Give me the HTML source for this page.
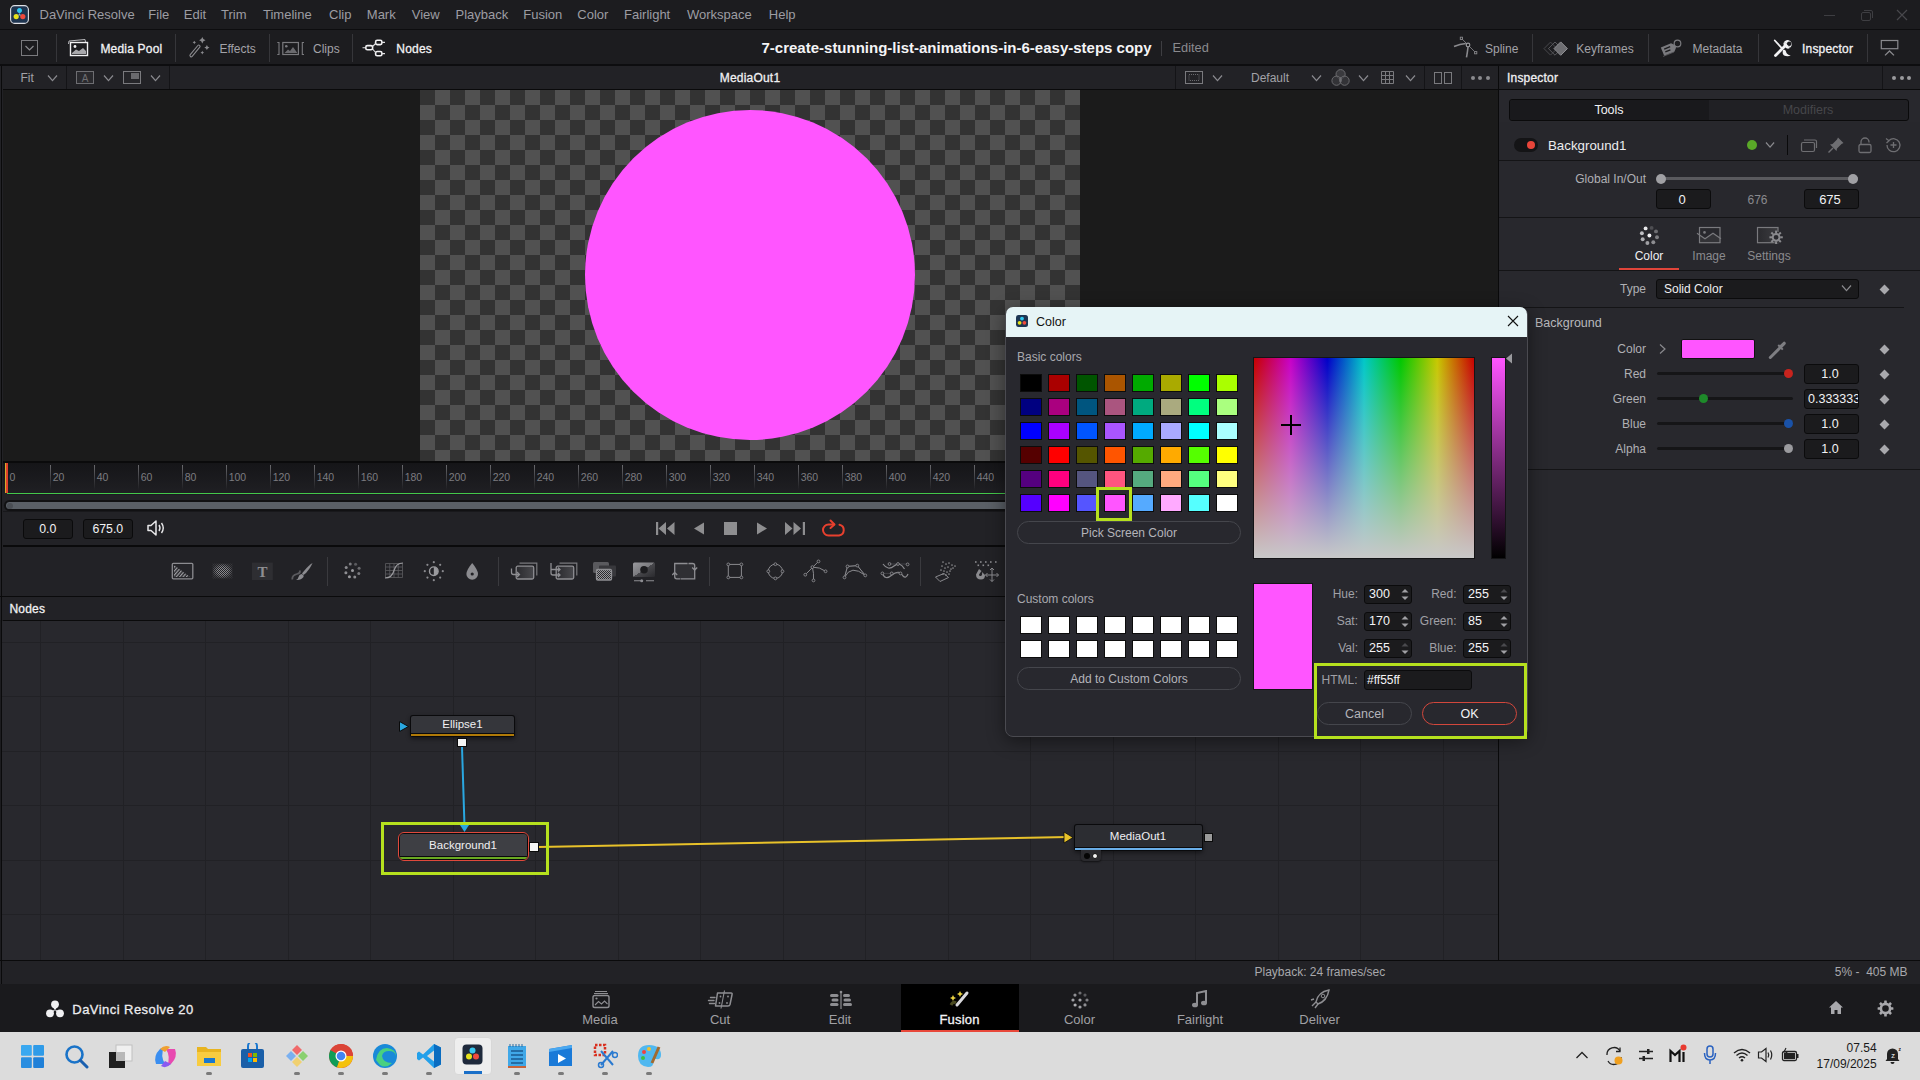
<!DOCTYPE html><html><head><meta charset="utf-8"><style>
*{margin:0;padding:0;box-sizing:border-box}
html,body{width:1920px;height:1080px;overflow:hidden;background:#1c1c1f;font-family:'Liberation Sans', sans-serif}
.a{position:absolute}
.t{position:absolute;white-space:pre}
</style></head><body><div class="a" style="left:0px;top:0px;width:1920px;height:29px;background:#1c1c1f;"></div>
<div class="a" style="left:0px;top:29px;width:1920px;height:1px;background:#0d0d0f;"></div>
<div class="a" style="left:0px;top:30px;width:1920px;height:35px;background:#1c1c1f;"></div>
<div class="a" style="left:0px;top:64px;width:1920px;height:2px;background:#0d0d0f;"></div>
<svg class="a" style="left:10px;top:5px;" width="19" height="19" viewBox="0 0 19 19"><rect x="0.6" y="0.6" width="17.8" height="17.8" rx="4" fill="#1f3550" stroke="#e0e0e4" stroke-width="1.1"/><path d="M9.5 3.2 a2.3 2.3 0 1 1 -0.01 0 Z" fill="#2ec7f0"/><circle cx="9.5" cy="5.6" r="2.3" fill="#2ec7f0"/><circle cx="6.2" cy="11.6" r="2.6" fill="#e6e21c"/><circle cx="12.8" cy="11.6" r="2.6" fill="#f04a3c"/><path d="M9.5 8 L8 10.5 L11 10.5Z" fill="#8aa0b8"/></svg>
<div class="t" style="top:8.00px;font-size:13px;line-height:13px;color:#9d9da3;left:39.5px;">DaVinci Resolve</div>
<div class="t" style="top:8.00px;font-size:13px;line-height:13px;color:#9d9da3;left:148.3px;">File</div>
<div class="t" style="top:8.00px;font-size:13px;line-height:13px;color:#9d9da3;left:183.8px;">Edit</div>
<div class="t" style="top:8.00px;font-size:13px;line-height:13px;color:#9d9da3;left:221px;">Trim</div>
<div class="t" style="top:8.00px;font-size:13px;line-height:13px;color:#9d9da3;left:263px;">Timeline</div>
<div class="t" style="top:8.00px;font-size:13px;line-height:13px;color:#9d9da3;left:329px;">Clip</div>
<div class="t" style="top:8.00px;font-size:13px;line-height:13px;color:#9d9da3;left:366.8px;">Mark</div>
<div class="t" style="top:8.00px;font-size:13px;line-height:13px;color:#9d9da3;left:411.8px;">View</div>
<div class="t" style="top:8.00px;font-size:13px;line-height:13px;color:#9d9da3;left:455.5px;">Playback</div>
<div class="t" style="top:8.00px;font-size:13px;line-height:13px;color:#9d9da3;left:523.3px;">Fusion</div>
<div class="t" style="top:8.00px;font-size:13px;line-height:13px;color:#9d9da3;left:577.3px;">Color</div>
<div class="t" style="top:8.00px;font-size:13px;line-height:13px;color:#9d9da3;left:624px;">Fairlight</div>
<div class="t" style="top:8.00px;font-size:13px;line-height:13px;color:#9d9da3;left:687px;">Workspace</div>
<div class="t" style="top:8.00px;font-size:13px;line-height:13px;color:#9d9da3;left:768.8px;">Help</div>
<div class="a" style="left:1824px;top:15px;width:11px;height:1px;background:#3e3e42;"></div>
<svg class="a" style="left:1859px;top:8px;" width="16" height="14" viewBox="0 0 16 14"><rect x="2.5" y="4.5" width="9" height="8" rx="1.5" fill="none" stroke="#3e3e42"/><path d="M5 2.5 H12 a1.5 1.5 0 0 1 1.5 1.5 V10" fill="none" stroke="#3e3e42"/></svg>
<svg class="a" style="left:1896px;top:9px;" width="12" height="12" viewBox="0 0 12 12"><path d="M1 1 L11 11 M11 1 L1 11" stroke="#48484c" stroke-width="1.2"/></svg>
<svg class="a" style="left:20px;top:39px;" width="20" height="18" viewBox="0 0 20 18"><rect x="1.5" y="1.5" width="16" height="15" fill="none" stroke="#7a7a7e" stroke-width="1"/><path d="M5.5 7 L9.5 11 L13.5 7" fill="none" stroke="#8a8a8e" stroke-width="1.2"/></svg>
<div class="a" style="left:56px;top:34px;width:1px;height:28px;background:#36363a;"></div>
<div class="a" style="left:175px;top:34px;width:1px;height:28px;background:#36363a;"></div>
<div class="a" style="left:269px;top:34px;width:1px;height:28px;background:#36363a;"></div>
<div class="a" style="left:352px;top:34px;width:1px;height:28px;background:#36363a;"></div>
<svg class="a" style="left:66px;top:38px;" width="26" height="20" viewBox="0 0 26 20"><path d="M2.5 6 L3 3 L19 1.5 L19.5 4" fill="none" stroke="#b8b8bc" stroke-width="1"/><rect x="4.5" y="4.5" width="17" height="13" fill="none" stroke="#f0f0f2" stroke-width="1.4"/><circle cx="9" cy="8.5" r="1.4" fill="#f0f0f2"/><path d="M6 15 L10 11.5 L13 13 L17 10 L20 13 V16 H6 Z" fill="#a8a8ac"/></svg>
<div class="t" style="top:42.54px;font-size:12px;line-height:12px;color:#f2f2f4;-webkit-text-stroke:0.3px #f2f2f4;letter-spacing:0.2px;left:100.4px;">Media Pool</div>
<svg class="a" style="left:188px;top:36px;" width="24" height="24" viewBox="0 0 24 24"><path d="M3.2 19.5 L10.8 10.3" stroke="#8a8a8e" stroke-width="3.6" stroke-linecap="round"/><path d="M3.2 19.5 L10.8 10.3" stroke="#1c1c1f" stroke-width="1.4" stroke-linecap="round"/><path d="M14.3 1.0499999999999998 Q14.9 3.65 17.5 4.25 Q14.9 4.85 14.3 7.45 Q13.700000000000001 4.85 11.100000000000001 4.25 Q13.700000000000001 3.65 14.3 1.0499999999999998Z M18.9 8.9 Q19.4 11.0 21.5 11.5 Q19.4 12.0 18.9 14.1 Q18.4 12.0 16.299999999999997 11.5 Q18.4 11.0 18.9 8.9Z M6.3 4.8 Q6.6499999999999995 6.15 8.0 6.5 Q6.6499999999999995 6.85 6.3 8.2 Q5.95 6.85 4.6 6.5 Q5.95 6.15 6.3 4.8Z M14.3 14.8 Q14.65 16.25 16.1 16.6 Q14.65 16.950000000000003 14.3 18.400000000000002 Q13.950000000000001 16.950000000000003 12.5 16.6 Q13.950000000000001 16.25 14.3 14.8Z" fill="#8a8a8e"/></svg>
<div class="t" style="top:42.54px;font-size:12px;line-height:12px;color:#a3a3a8;left:219.4px;">Effects</div>
<svg class="a" style="left:276px;top:40px;" width="30" height="17" viewBox="0 0 30 17"><path d="M1.3 2.5 H3 V14.5 H1.3 M28 2.5 H26.3 V14.5 H28" fill="none" stroke="#7a7a7e" stroke-width="1.1"/><rect x="6.8" y="2.5" width="15.6" height="12" fill="none" stroke="#7a7a7e" stroke-width="1.2"/><circle cx="10.3" cy="6.3" r="1.3" fill="#7a7a7e"/><path d="M8.5 13 L12 9.5 L14 11 L17 7 L21 12.5 V13Z" fill="#6a6a6e"/></svg>
<div class="t" style="top:42.54px;font-size:12px;line-height:12px;color:#a3a3a8;left:313px;">Clips</div>
<svg class="a" style="left:361px;top:37px;" width="26" height="22" viewBox="0 0 26 22"><rect x="4.8" y="8.6" width="6.8" height="4.2" rx="1.6" fill="none" stroke="#f0f0f2" stroke-width="1.6"/><rect x="14.6" y="3.3" width="6.3" height="4.3" rx="1.6" fill="none" stroke="#f0f0f2" stroke-width="1.6"/><rect x="14.6" y="14.5" width="6.3" height="4.3" rx="1.6" fill="none" stroke="#f0f0f2" stroke-width="1.6"/><path d="M1.5 10.7 H4.8 M11.6 9.5 L14.6 6.5 M11.6 12 L14.6 15.5 M20.9 5.4 H24 M20.9 16.6 H24" fill="none" stroke="#e0e0e2" stroke-width="1.1"/></svg>
<div class="t" style="top:42.54px;font-size:12px;line-height:12px;color:#f2f2f4;-webkit-text-stroke:0.3px #f2f2f4;letter-spacing:0.2px;left:396.3px;">Nodes</div>
<div class="t" style="top:40.30px;font-size:15px;line-height:15px;color:#f4f4f6;font-weight:700;left:761.5px;">7-create-stunning-list-animations-in-6-easy-steps copy</div>
<div class="a" style="left:1161px;top:41px;width:1px;height:15px;background:#3e3e42;"></div>
<div class="t" style="top:41.86px;font-size:12.8px;line-height:12.8px;color:#8a8a8e;left:1172.5px;">Edited</div>
<div class="a" style="left:1532px;top:34px;width:1px;height:28px;background:#36363a;"></div>
<div class="a" style="left:1648px;top:34px;width:1px;height:28px;background:#36363a;"></div>
<div class="a" style="left:1758px;top:34px;width:1px;height:28px;background:#36363a;"></div>
<div class="a" style="left:1867px;top:34px;width:1px;height:28px;background:#36363a;"></div>
<svg class="a" style="left:1450px;top:34px;" width="30" height="26" viewBox="0 0 30 26"><path d="M4 12.6 Q10 10 15.8 9.5" fill="none" stroke="#8a8a8e" stroke-width="1.6"/><path d="M12.4 5.3 L16.8 9.8 M19.2 12.2 L24.6 17.6" stroke="#8a8a8e" stroke-width="0.8"/><rect x="10.3" y="3.2" width="2.2" height="2.2" fill="none" stroke="#8a8a8e" stroke-width="0.9"/><rect x="24.6" y="17.6" width="2.2" height="2.2" fill="none" stroke="#8a8a8e" stroke-width="0.9"/><circle cx="18" cy="11" r="1.8" fill="none" stroke="#9a9a9e" stroke-width="1.2"/><path d="M18 13 Q17.5 18 16.5 23.4" fill="none" stroke="#8a8a8e" stroke-width="1.6"/></svg>
<div class="t" style="top:42.54px;font-size:12px;line-height:12px;color:#a3a3a8;left:1485px;">Spline</div>
<svg class="a" style="left:1542px;top:38px;" width="28" height="22" viewBox="0 0 28 22"><path d="M8.5 4.1 L2 10.6 L8.5 17.1 L15 10.6 Z" fill="none" stroke="#48484c" stroke-width="1"/><path d="M13 4 L6.4 10.6 L13 17.2 L19.6 10.6 Z" fill="none" stroke="#58585c" stroke-width="1"/><path d="M18.7 3.9 L12 10.6 L18.7 17.3 L25.4 10.6 Z" fill="#6e6e72" stroke="#909094" stroke-width="1"/></svg>
<div class="t" style="top:42.54px;font-size:12px;line-height:12px;color:#a3a3a8;left:1576.3px;">Keyframes</div>
<svg class="a" style="left:1660px;top:38px;" width="24" height="20" viewBox="0 0 24 20"><g transform="rotate(-22 9 11)"><path d="M2 6.5 H13 L16 9.5 V12.5 L13 15.5 H2 Z" fill="#7a7a7e"/><path d="M4.5 9.3 H11 M4.5 12.3 H10" stroke="#1c1c1f" stroke-width="1.4"/></g><circle cx="17.5" cy="5.5" r="3.3" fill="none" stroke="#7a7a7e" stroke-width="1.2"/><path d="M3 18.5 L14 14" stroke="#5a5a5e" stroke-width="0.8"/></svg>
<div class="t" style="top:42.54px;font-size:12px;line-height:12px;color:#a3a3a8;left:1692.5px;">Metadata</div>
<svg class="a" style="left:1772px;top:36px;" width="24" height="24" viewBox="0 0 24 24"><path d="M2.8 4.5 L10 12.3" stroke="#f2f2f4" stroke-width="1.8" stroke-linecap="round"/><path d="M11 14 Q10 18 12 19.5 Q15.5 21 18.8 19.6 Q14.5 18.5 14 15.5 Q13.5 13 11 14Z" fill="#f2f2f4"/><path d="M3.5 19.5 L13.2 9.8" stroke="#f2f2f4" stroke-width="2.8" stroke-linecap="round"/><path d="M12 10.5 A4.2 4.2 0 1 1 17.5 12 L17 10 A2.2 2.2 0 1 0 15 7.6 L12.5 6.5 A4.2 4.2 0 0 0 12 10.5Z" fill="#f2f2f4"/><path d="M13 11 A4 4 0 0 1 12.2 6.6 L15 7.5 Q14.5 9 16.5 9.8 L17.6 12.3 A4 4 0 0 1 13 11Z" fill="#f2f2f4"/></svg>
<div class="t" style="top:42.54px;font-size:12px;line-height:12px;color:#f2f2f4;-webkit-text-stroke:0.3px #f2f2f4;letter-spacing:0.2px;left:1802px;">Inspector</div>
<svg class="a" style="left:1879px;top:38px;" width="22" height="20" viewBox="0 0 22 20"><rect x="2.3" y="2.5" width="16.5" height="8.2" fill="none" stroke="#8a8a8e" stroke-width="1.2"/><path d="M6 17.4 L10.5 13 L15 17.4" fill="none" stroke="#8a8a8e" stroke-width="1.3"/></svg>
<div class="a" style="left:0px;top:66px;width:1498px;height:530px;background:#222226;"></div>
<div class="a" style="left:1px;top:66px;width:1px;height:530px;background:#0a0a0b;"></div>
<div class="t" style="top:71.84px;font-size:12px;line-height:12px;color:#a3a3a8;left:20.5px;">Fit</div>
<svg class="a" style="left:46.5px;top:73.9px;" width="11.0" height="8.2" viewBox="0 0 11.0 8.2"><path d="M1 1.5 L5.50 6.70 L10.00 1.5" fill="none" stroke="#8a8a8f" stroke-width="1.2"/></svg>
<div class="a" style="left:66px;top:66px;width:1px;height:23px;background:#141417;"></div>
<svg class="a" style="left:75px;top:70px;" width="20" height="15" viewBox="0 0 20 15"><rect x="1.5" y="1.5" width="17" height="12" fill="#2a2a2e" stroke="#6e6e72"/><text x="10" y="11.5" font-size="10" text-anchor="middle" fill="#6e6e72" font-family="Liberation Sans">A</text></svg>
<svg class="a" style="left:103.0px;top:73.9px;" width="11.0" height="8.2" viewBox="0 0 11.0 8.2"><path d="M1 1.5 L5.50 6.70 L10.00 1.5" fill="none" stroke="#8a8a8f" stroke-width="1.2"/></svg>
<svg class="a" style="left:122px;top:70px;" width="20" height="15" viewBox="0 0 20 15"><rect x="1.5" y="1.5" width="17" height="12" fill="#252529" stroke="#7a7a7e"/><rect x="9" y="3" width="8" height="6" fill="#6a6a6e"/></svg>
<svg class="a" style="left:150.0px;top:73.9px;" width="11.0" height="8.2" viewBox="0 0 11.0 8.2"><path d="M1 1.5 L5.50 6.70 L10.00 1.5" fill="none" stroke="#8a8a8f" stroke-width="1.2"/></svg>
<div class="a" style="left:169px;top:66px;width:1px;height:23px;background:#141417;"></div>
<div class="t" style="top:71.84px;font-size:12px;line-height:12px;color:#f0f0f2;-webkit-text-stroke:0.3px #f0f0f2;letter-spacing:0.2px;left:350px;width:800px;text-align:center;">MediaOut1</div>
<div class="a" style="left:1175px;top:66px;width:1px;height:23px;background:#141417;"></div>
<div class="a" style="left:1424px;top:66px;width:1px;height:23px;background:#141417;"></div>
<div class="a" style="left:1461px;top:66px;width:1px;height:23px;background:#141417;"></div>
<svg class="a" style="left:1184px;top:70px;" width="20" height="15" viewBox="0 0 20 15"><rect x="1.5" y="1.5" width="17" height="12" fill="none" stroke="#7a7a7e"/><rect x="5" y="4.5" width="10" height="6" fill="none" stroke="#6a6a6e" stroke-dasharray="1 1"/></svg>
<svg class="a" style="left:1211.5px;top:73.9px;" width="11.0" height="8.2" viewBox="0 0 11.0 8.2"><path d="M1 1.5 L5.50 6.70 L10.00 1.5" fill="none" stroke="#8a8a8f" stroke-width="1.2"/></svg>
<div class="t" style="top:71.84px;font-size:12px;line-height:12px;color:#a3a3a8;left:1251px;">Default</div>
<svg class="a" style="left:1310.5px;top:73.9px;" width="11.0" height="8.2" viewBox="0 0 11.0 8.2"><path d="M1 1.5 L5.50 6.70 L10.00 1.5" fill="none" stroke="#8a8a8f" stroke-width="1.2"/></svg>
<svg class="a" style="left:1329px;top:66px;" width="22" height="22" viewBox="0 0 22 22"><g fill="#3a3a3e" stroke="#707074" stroke-width="0.9"><circle cx="11.6" cy="8.2" r="4.6"/><circle cx="7.5" cy="14.7" r="4.6" fill-opacity="0.7"/><circle cx="15.6" cy="14.7" r="4.6" fill-opacity="0.7"/></g><path d="M11.5 11 Q13.5 12.5 12.5 15.5 Q11.5 17.5 10.5 15.5 Q9.5 12.5 11.5 11Z" fill="#6e6e72"/></svg>
<svg class="a" style="left:1358.0px;top:73.9px;" width="11.0" height="8.2" viewBox="0 0 11.0 8.2"><path d="M1 1.5 L5.50 6.70 L10.00 1.5" fill="none" stroke="#8a8a8f" stroke-width="1.2"/></svg>
<svg class="a" style="left:1380px;top:70px;" width="16" height="15" viewBox="0 0 16 15"><path d="M1.5 1.5 H13.5 V13.5 H1.5 Z M5.5 1.5 V13.5 M9.5 1.5 V13.5 M1.5 5.5 H13.5 M1.5 9.5 H13.5" fill="none" stroke="#7a7a7e"/></svg>
<svg class="a" style="left:1404.5px;top:73.9px;" width="11.0" height="8.2" viewBox="0 0 11.0 8.2"><path d="M1 1.5 L5.50 6.70 L10.00 1.5" fill="none" stroke="#8a8a8f" stroke-width="1.2"/></svg>
<svg class="a" style="left:1433px;top:71px;" width="20" height="14" viewBox="0 0 20 14"><rect x="1.5" y="1.5" width="7" height="11" fill="none" stroke="#7a7a7e"/><rect x="11.5" y="1.5" width="7" height="11" fill="none" stroke="#7a7a7e"/></svg>
<div class="a" style="left:1470.5px;top:76px;width:4px;height:4px;border-radius:2px;background:#8a8a8e"></div>
<div class="a" style="left:1478px;top:76px;width:4px;height:4px;border-radius:2px;background:#8a8a8e"></div>
<div class="a" style="left:1485.5px;top:76px;width:4px;height:4px;border-radius:2px;background:#8a8a8e"></div>
<div class="a" style="left:3px;top:89px;width:1495px;height:1px;background:#0a0a0b;"></div>
<div class="a" style="left:3px;top:90px;width:1495px;height:372px;background:#1b1b1b;"></div>
<div class="a" style="left:420px;top:90px;width:660px;height:372px;background-color:#515151;background-image:linear-gradient(45deg,#333333 25%,transparent 25%,transparent 75%,#333333 75%),linear-gradient(45deg,#333333 25%,transparent 25%,transparent 75%,#333333 75%);background-size:30px 30px;background-position:15px 0,0 15px"></div>
<div class="a" style="left:585px;top:110px;width:330px;height:330px;border-radius:50%;background:#ff55ff"></div>
<div class="a" style="left:3px;top:461px;width:1495px;height:2px;background:#0a0a0b;"></div>
<div class="a" style="left:3px;top:463px;width:1495px;height:30px;background:linear-gradient(#151518,#1f1f23)"></div>
<div class="a" style="left:49.7px;top:465px;width:1px;height:25px;background:linear-gradient(#6a6a6e,rgba(90,90,94,0))"></div>
<div class="t" style="top:472.11px;font-size:10.5px;line-height:10.5px;color:#7c7c80;left:52.7px;">20</div>
<div class="a" style="left:93.7px;top:465px;width:1px;height:25px;background:linear-gradient(#6a6a6e,rgba(90,90,94,0))"></div>
<div class="t" style="top:472.11px;font-size:10.5px;line-height:10.5px;color:#7c7c80;left:96.7px;">40</div>
<div class="a" style="left:137.7px;top:465px;width:1px;height:25px;background:linear-gradient(#6a6a6e,rgba(90,90,94,0))"></div>
<div class="t" style="top:472.11px;font-size:10.5px;line-height:10.5px;color:#7c7c80;left:140.7px;">60</div>
<div class="a" style="left:181.7px;top:465px;width:1px;height:25px;background:linear-gradient(#6a6a6e,rgba(90,90,94,0))"></div>
<div class="t" style="top:472.11px;font-size:10.5px;line-height:10.5px;color:#7c7c80;left:184.7px;">80</div>
<div class="a" style="left:225.7px;top:465px;width:1px;height:25px;background:linear-gradient(#6a6a6e,rgba(90,90,94,0))"></div>
<div class="t" style="top:472.11px;font-size:10.5px;line-height:10.5px;color:#7c7c80;left:228.7px;">100</div>
<div class="a" style="left:269.7px;top:465px;width:1px;height:25px;background:linear-gradient(#6a6a6e,rgba(90,90,94,0))"></div>
<div class="t" style="top:472.11px;font-size:10.5px;line-height:10.5px;color:#7c7c80;left:272.7px;">120</div>
<div class="a" style="left:313.7px;top:465px;width:1px;height:25px;background:linear-gradient(#6a6a6e,rgba(90,90,94,0))"></div>
<div class="t" style="top:472.11px;font-size:10.5px;line-height:10.5px;color:#7c7c80;left:316.7px;">140</div>
<div class="a" style="left:357.7px;top:465px;width:1px;height:25px;background:linear-gradient(#6a6a6e,rgba(90,90,94,0))"></div>
<div class="t" style="top:472.11px;font-size:10.5px;line-height:10.5px;color:#7c7c80;left:360.7px;">160</div>
<div class="a" style="left:401.7px;top:465px;width:1px;height:25px;background:linear-gradient(#6a6a6e,rgba(90,90,94,0))"></div>
<div class="t" style="top:472.11px;font-size:10.5px;line-height:10.5px;color:#7c7c80;left:404.7px;">180</div>
<div class="a" style="left:445.7px;top:465px;width:1px;height:25px;background:linear-gradient(#6a6a6e,rgba(90,90,94,0))"></div>
<div class="t" style="top:472.11px;font-size:10.5px;line-height:10.5px;color:#7c7c80;left:448.7px;">200</div>
<div class="a" style="left:489.7px;top:465px;width:1px;height:25px;background:linear-gradient(#6a6a6e,rgba(90,90,94,0))"></div>
<div class="t" style="top:472.11px;font-size:10.5px;line-height:10.5px;color:#7c7c80;left:492.7px;">220</div>
<div class="a" style="left:533.7px;top:465px;width:1px;height:25px;background:linear-gradient(#6a6a6e,rgba(90,90,94,0))"></div>
<div class="t" style="top:472.11px;font-size:10.5px;line-height:10.5px;color:#7c7c80;left:536.7px;">240</div>
<div class="a" style="left:577.7px;top:465px;width:1px;height:25px;background:linear-gradient(#6a6a6e,rgba(90,90,94,0))"></div>
<div class="t" style="top:472.11px;font-size:10.5px;line-height:10.5px;color:#7c7c80;left:580.7px;">260</div>
<div class="a" style="left:621.7px;top:465px;width:1px;height:25px;background:linear-gradient(#6a6a6e,rgba(90,90,94,0))"></div>
<div class="t" style="top:472.11px;font-size:10.5px;line-height:10.5px;color:#7c7c80;left:624.7px;">280</div>
<div class="a" style="left:665.7px;top:465px;width:1px;height:25px;background:linear-gradient(#6a6a6e,rgba(90,90,94,0))"></div>
<div class="t" style="top:472.11px;font-size:10.5px;line-height:10.5px;color:#7c7c80;left:668.7px;">300</div>
<div class="a" style="left:709.7px;top:465px;width:1px;height:25px;background:linear-gradient(#6a6a6e,rgba(90,90,94,0))"></div>
<div class="t" style="top:472.11px;font-size:10.5px;line-height:10.5px;color:#7c7c80;left:712.7px;">320</div>
<div class="a" style="left:753.7px;top:465px;width:1px;height:25px;background:linear-gradient(#6a6a6e,rgba(90,90,94,0))"></div>
<div class="t" style="top:472.11px;font-size:10.5px;line-height:10.5px;color:#7c7c80;left:756.7px;">340</div>
<div class="a" style="left:797.7px;top:465px;width:1px;height:25px;background:linear-gradient(#6a6a6e,rgba(90,90,94,0))"></div>
<div class="t" style="top:472.11px;font-size:10.5px;line-height:10.5px;color:#7c7c80;left:800.7px;">360</div>
<div class="a" style="left:841.7px;top:465px;width:1px;height:25px;background:linear-gradient(#6a6a6e,rgba(90,90,94,0))"></div>
<div class="t" style="top:472.11px;font-size:10.5px;line-height:10.5px;color:#7c7c80;left:844.7px;">380</div>
<div class="a" style="left:885.7px;top:465px;width:1px;height:25px;background:linear-gradient(#6a6a6e,rgba(90,90,94,0))"></div>
<div class="t" style="top:472.11px;font-size:10.5px;line-height:10.5px;color:#7c7c80;left:888.7px;">400</div>
<div class="a" style="left:929.7px;top:465px;width:1px;height:25px;background:linear-gradient(#6a6a6e,rgba(90,90,94,0))"></div>
<div class="t" style="top:472.11px;font-size:10.5px;line-height:10.5px;color:#7c7c80;left:932.7px;">420</div>
<div class="a" style="left:973.7px;top:465px;width:1px;height:25px;background:linear-gradient(#6a6a6e,rgba(90,90,94,0))"></div>
<div class="t" style="top:472.11px;font-size:10.5px;line-height:10.5px;color:#7c7c80;left:976.7px;">440</div>
<div class="a" style="left:1017.7px;top:465px;width:1px;height:25px;background:linear-gradient(#6a6a6e,rgba(90,90,94,0))"></div>
<div class="t" style="top:472.11px;font-size:10.5px;line-height:10.5px;color:#7c7c80;left:1020.7px;">460</div>
<div class="a" style="left:1061.7px;top:465px;width:1px;height:25px;background:linear-gradient(#6a6a6e,rgba(90,90,94,0))"></div>
<div class="t" style="top:472.11px;font-size:10.5px;line-height:10.5px;color:#7c7c80;left:1064.7px;">480</div>
<div class="a" style="left:1105.7px;top:465px;width:1px;height:25px;background:linear-gradient(#6a6a6e,rgba(90,90,94,0))"></div>
<div class="t" style="top:472.11px;font-size:10.5px;line-height:10.5px;color:#7c7c80;left:1108.7px;">500</div>
<div class="a" style="left:1149.7px;top:465px;width:1px;height:25px;background:linear-gradient(#6a6a6e,rgba(90,90,94,0))"></div>
<div class="t" style="top:472.11px;font-size:10.5px;line-height:10.5px;color:#7c7c80;left:1152.7px;">520</div>
<div class="a" style="left:1193.7px;top:465px;width:1px;height:25px;background:linear-gradient(#6a6a6e,rgba(90,90,94,0))"></div>
<div class="t" style="top:472.11px;font-size:10.5px;line-height:10.5px;color:#7c7c80;left:1196.7px;">540</div>
<div class="a" style="left:1237.7px;top:465px;width:1px;height:25px;background:linear-gradient(#6a6a6e,rgba(90,90,94,0))"></div>
<div class="t" style="top:472.11px;font-size:10.5px;line-height:10.5px;color:#7c7c80;left:1240.7px;">560</div>
<div class="a" style="left:1281.7px;top:465px;width:1px;height:25px;background:linear-gradient(#6a6a6e,rgba(90,90,94,0))"></div>
<div class="t" style="top:472.11px;font-size:10.5px;line-height:10.5px;color:#7c7c80;left:1284.7px;">580</div>
<div class="a" style="left:1325.7px;top:465px;width:1px;height:25px;background:linear-gradient(#6a6a6e,rgba(90,90,94,0))"></div>
<div class="t" style="top:472.11px;font-size:10.5px;line-height:10.5px;color:#7c7c80;left:1328.7px;">600</div>
<div class="a" style="left:1369.7px;top:465px;width:1px;height:25px;background:linear-gradient(#6a6a6e,rgba(90,90,94,0))"></div>
<div class="t" style="top:472.11px;font-size:10.5px;line-height:10.5px;color:#7c7c80;left:1372.7px;">620</div>
<div class="a" style="left:1413.7px;top:465px;width:1px;height:25px;background:linear-gradient(#6a6a6e,rgba(90,90,94,0))"></div>
<div class="t" style="top:472.11px;font-size:10.5px;line-height:10.5px;color:#7c7c80;left:1416.7px;">640</div>
<div class="a" style="left:1457.7px;top:465px;width:1px;height:25px;background:linear-gradient(#6a6a6e,rgba(90,90,94,0))"></div>
<div class="t" style="top:472.11px;font-size:10.5px;line-height:10.5px;color:#7c7c80;left:1460.7px;">660</div>
<div class="t" style="top:472.11px;font-size:10.5px;line-height:10.5px;color:#7c7c80;left:9.5px;">0</div>
<div class="a" style="left:5px;top:463px;width:1px;height:30px;background:#d6a92a;"></div>
<div class="a" style="left:6px;top:463px;width:2px;height:30px;background:#e0402c;"></div>
<div class="a" style="left:7px;top:493px;width:1491px;height:1px;background:#44c84a;"></div>
<div class="a" style="left:7px;top:494px;width:1491px;height:1px;background:#1c1a22;"></div>
<div class="a" style="left:3px;top:495px;width:1495px;height:5px;background:#222226;"></div>
<div class="a" style="left:4px;top:500px;width:1494px;height:11px;background:#111113;border-radius:6px 0 0 6px"></div>
<div class="a" style="left:6px;top:502px;width:1492px;height:7px;background:#5a5f66;border-radius:4px 0 0 4px"></div>
<div class="a" style="left:7px;top:502.5px;width:6px;height:6px;background:#4a4e54;border-radius:3px"></div>
<div class="a" style="left:3px;top:511px;width:1495px;height:1px;background:#18181b;"></div>
<div class="a" style="left:23px;top:519px;width:49.5px;height:19.5px;background:#1b1b1d;border:1px solid #0a0a0b;border-radius:3px"></div>
<div class="t" style="top:523.09px;font-size:12.3px;line-height:12.3px;color:#f2f2f4;left:-352.2px;width:800px;text-align:center;">0.0</div>
<div class="a" style="left:83px;top:519px;width:49.5px;height:19.5px;background:#1b1b1d;border:1px solid #0a0a0b;border-radius:3px"></div>
<div class="t" style="top:523.09px;font-size:12.3px;line-height:12.3px;color:#f2f2f4;left:-292.2px;width:800px;text-align:center;">675.0</div>
<svg class="a" style="left:146px;top:519px;" width="20" height="18" viewBox="0 0 20 18"><path d="M2 6.5 H5 L10 2 V16 L5 11.5 H2 Z" fill="none" stroke="#e8e8ea" stroke-width="1.5" stroke-linejoin="round"/><path d="M13 6 Q15 9 13 12 M15.5 4 Q19 9 15.5 14" fill="none" stroke="#e8e8ea" stroke-width="1.4"/></svg>
<svg class="a" style="left:655px;top:521px;" width="22" height="15" viewBox="0 0 22 15"><rect x="1" y="1" width="2.2" height="13" fill="#8e8e90"/><path d="M11 1 L3.5 7.5 L11 14 Z M19.5 1 L12 7.5 L19.5 14 Z" fill="#8e8e90"/></svg>
<svg class="a" style="left:693px;top:521px;" width="12" height="15" viewBox="0 0 12 15"><path d="M11 1.5 L1 7.5 L11 13.5 Z" fill="#8e8e90"/></svg>
<div class="a" style="left:724px;top:522px;width:13px;height:13px;background:#8e8e90;"></div>
<svg class="a" style="left:756px;top:521px;" width="12" height="15" viewBox="0 0 12 15"><path d="M1 1.5 L11 7.5 L1 13.5 Z" fill="#8e8e90"/></svg>
<svg class="a" style="left:784px;top:521px;" width="22" height="15" viewBox="0 0 22 15"><rect x="18.8" y="1" width="2.2" height="13" fill="#8e8e90"/><path d="M1 1 L8.5 7.5 L1 14 Z M9.5 1 L17 7.5 L9.5 14 Z" fill="#8e8e90"/></svg>
<svg class="a" style="left:818px;top:515px;" width="30" height="24" viewBox="0 0 30 24"><path d="M16 9.5 H10.5 A5.5 5.5 0 0 0 10.5 20.5 H21 A5.5 5.5 0 0 0 21.5 9.7" fill="none" stroke="#e8402e" stroke-width="2" stroke-linecap="round"/><path d="M12.5 5.5 L16.5 9.5 L12.5 13" fill="none" stroke="#e8402e" stroke-width="2" stroke-linecap="round" stroke-linejoin="round"/></svg>
<div class="a" style="left:3px;top:545px;width:1495px;height:2px;background:#0a0a0b;"></div>
<div class="a" style="left:3px;top:547px;width:1495px;height:49px;background:#222226;"></div>
<div class="a" style="left:327px;top:557px;width:1px;height:29px;background:#3a3a3e;"></div>
<div class="a" style="left:498px;top:557px;width:1px;height:29px;background:#3a3a3e;"></div>
<div class="a" style="left:709px;top:557px;width:1px;height:29px;background:#3a3a3e;"></div>
<div class="a" style="left:920px;top:557px;width:1px;height:29px;background:#3a3a3e;"></div>
<svg class="a" style="left:171px;top:562px;" width="23" height="18" viewBox="0 0 23 18"><defs><pattern id="hp" width="2.6" height="2.6" patternUnits="userSpaceOnUse" patternTransform="rotate(40)"><rect width="1.2" height="2.6" fill="#a0a0a4"/></pattern></defs><rect x="1.3" y="1.3" width="20.5" height="15.5" rx="1" fill="#252529" stroke="#8c8c90" stroke-width="1.3"/><path d="M3 3 V15 H19Z" fill="url(#hp)"/></svg>
<svg class="a" style="left:212px;top:563px;" width="21" height="16" viewBox="0 0 21 16"><defs><pattern id="dp" width="2" height="2" patternUnits="userSpaceOnUse"><rect width="1" height="1" fill="#8a8a8e"/><rect x="1" y="1" width="1" height="1" fill="#8a8a8e"/></pattern><radialGradient id="rg"><stop offset="0.5" stop-color="#fff"/><stop offset="1" stop-color="#fff" stop-opacity="0.2"/></radialGradient><mask id="mk"><rect width="21" height="16" fill="url(#rg)"/></mask></defs><rect x="0.5" y="0.5" width="20" height="15" fill="url(#dp)" mask="url(#mk)"/></svg>
<svg class="a" style="left:252px;top:562px;" width="21" height="18" viewBox="0 0 21 18"><rect x="0" y="0.6" width="20.8" height="17.4" fill="#2e2e32"/><text x="10.4" y="15" font-size="15" font-weight="700" font-family="Liberation Serif" text-anchor="middle" fill="#8e8e92">T</text></svg>
<svg class="a" style="left:291px;top:562px;" width="23" height="19" viewBox="0 0 23 19"><path d="M21.5 1 Q20 5 15 11 L12.5 13 L11 11.5 L13 9 Q18 3 21.5 1Z" fill="#8c8c90"/><path d="M10.5 12 Q8 12.5 7.5 15 Q7 17.5 5 18 Q10 18.5 12.5 15 Q13 13.5 12 12.8Z" fill="#8c8c90"/><path d="M1.5 17.5 Q0.5 13.5 6 12 Q10 11 8.5 8.5" fill="none" stroke="#5a5a5e" stroke-width="1.8"/></svg>
<svg class="a" style="left:343px;top:561px;" width="20" height="20" viewBox="0 0 20 20"><circle cx="7.24" cy="2.88" r="1.5" fill="#7a7a7e"/><circle cx="12.58" cy="3.21" r="1.5" fill="#5a5a5e"/><circle cx="16.12" cy="7.23" r="1.5" fill="#6a6a6e"/><circle cx="15.79" cy="12.58" r="1.5" fill="#7a7a7e"/><circle cx="11.77" cy="16.12" r="1.5" fill="#8a8a8e"/><circle cx="6.43" cy="15.79" r="1.5" fill="#9a9a9e"/><circle cx="2.88" cy="11.78" r="1.5" fill="#8e8e92"/><circle cx="3.21" cy="6.43" r="1.5" fill="#8a8a8e"/><circle cx="9.5" cy="9.5" r="1.5" fill="#9a9a9e"/></svg>
<svg class="a" style="left:384px;top:562px;" width="20" height="17" viewBox="0 0 20 17"><path d="M1.5 1.5 H18.5 V15.5 H1.5 Z M5.75 1.5 V15.5 M10 1.5 V15.5 M14.25 1.5 V15.5 M1.5 5 H18.5 M1.5 8.5 H18.5 M1.5 12 H18.5" fill="none" stroke="#5c5c60" stroke-width="0.8"/><path d="M1 16 Q8 16 10 8.5 Q12 1 19 1" fill="none" stroke="#9a9a9e" stroke-width="1.2"/></svg>
<svg class="a" style="left:423px;top:561px;" width="22" height="21" viewBox="0 0 22 21"><circle cx="10.8" cy="10.2" r="4.3" fill="none" stroke="#9a9a9e" stroke-width="1.4"/><path d="M10.8 5.9 A4.3 4.3 0 0 1 10.8 14.5Z" fill="#9a9a9e"/><circle cx="10.81" cy="1.20" r="1.1" fill="#8a8a8e"/><circle cx="17.17" cy="3.84" r="1.1" fill="#8a8a8e"/><circle cx="19.80" cy="10.20" r="1.1" fill="#8a8a8e"/><circle cx="17.17" cy="16.56" r="1.1" fill="#8a8a8e"/><circle cx="10.81" cy="19.20" r="1.1" fill="#8a8a8e"/><circle cx="4.44" cy="16.57" r="1.1" fill="#8a8a8e"/><circle cx="1.80" cy="10.21" r="1.1" fill="#8a8a8e"/><circle cx="4.42" cy="3.85" r="1.1" fill="#8a8a8e"/></svg>
<svg class="a" style="left:466px;top:562px;" width="13" height="18" viewBox="0 0 13 18"><path d="M6.2 1 Q12 8 12 12 A5.8 5.8 0 0 1 0.4 12 Q0.4 8 6.2 1Z" fill="#8c8c90"/><circle cx="6.2" cy="12" r="1.6" fill="#222226"/></svg>
<svg class="a" style="left:510px;top:561px;" width="28" height="20" viewBox="0 0 28 20"><defs><linearGradient id="g1" x1="0" y1="0" x2="1" y2="0"><stop offset="0" stop-color="#2a2a2e"/><stop offset="1" stop-color="#48484c"/></linearGradient></defs><path d="M9.5 2.2 H26.8 V14.5" fill="none" stroke="#7a7a7e" stroke-width="1.2"/><rect x="6.2" y="5.2" width="17.5" height="12.8" rx="1.5" fill="url(#g1)" stroke="#8e8e92" stroke-width="1.3"/><path d="M1.5 7.5 V11.5 Q1.5 13.5 3.5 13.5 H9.5 M7 11 L9.5 13.5 L7 16" fill="none" stroke="#8e8e92" stroke-width="1.3"/></svg>
<svg class="a" style="left:550px;top:561px;" width="28" height="21" viewBox="0 0 28 21"><path d="M9.5 2.2 H26.8 V14.5" fill="none" stroke="#7a7a7e" stroke-width="1.2"/><rect x="6.2" y="5.2" width="17.5" height="12.8" rx="1.5" fill="url(#g1)" stroke="#8e8e92" stroke-width="1.3"/><path d="M1 2 V12 Q1 14 3 14 H10 M1 8.5 H10 M8 6.5 L10 8.5 L8 10.5 M8 12 L10 14 L8 16" fill="none" stroke="#8e8e92" stroke-width="1.3"/></svg>
<svg class="a" style="left:592px;top:561px;" width="26" height="21" viewBox="0 0 26 21"><defs><pattern id="ck" width="2" height="2" patternUnits="userSpaceOnUse"><rect width="2" height="2" fill="#2a2a2e"/><rect width="1" height="1" fill="#9a9a9e"/><rect x="1" y="1" width="1" height="1" fill="#9a9a9e"/></pattern></defs><rect x="1" y="1" width="16" height="11" rx="1.5" fill="#5a5a5e"/><rect x="7" y="4.5" width="17" height="11" rx="1" fill="#38383c"/><rect x="4.5" y="8.5" width="15" height="10.5" rx="1.2" fill="url(#ck)" stroke="#8e8e92" stroke-width="1.3"/></svg>
<svg class="a" style="left:632px;top:561px;" width="24" height="22" viewBox="0 0 24 22"><defs><linearGradient id="g2" x1="0" y1="0" x2="1" y2="1"><stop offset="0" stop-color="#9a9a9e"/><stop offset="0.5" stop-color="#7a7a7e"/><stop offset="0.5" stop-color="#48484c"/><stop offset="1" stop-color="#2a2a2e"/></linearGradient></defs><rect x="1" y="1.5" width="22" height="14.5" rx="1.5" fill="url(#g2)"/><circle cx="12" cy="8.8" r="3.8" fill="#1c1c1f"/><path d="M2 19.7 H11 M14 19.7 H22" stroke="#8e8e92" stroke-width="1.1"/><circle cx="9.7" cy="19.7" r="1.5" fill="#8e8e92"/></svg>
<svg class="a" style="left:672px;top:561px;" width="26" height="21" viewBox="0 0 26 21"><rect x="2.7" y="2.5" width="20" height="15.3" fill="#2f2f33"/><path d="M2.7 11.2 V2.5 H15.6 M22.7 9 V17.8 H9" fill="none" stroke="#8e8e92" stroke-width="1.3"/><path d="M16.5 2.5 H20.5 Q22.7 2.5 22.7 4.5 V8.5 M20.2 6.5 L22.7 9 L25.2 6.5 M8.5 17.8 H4.7 Q2.7 17.8 2.7 15.8 V11.8 M0.2 14 L2.7 11.5 L5.2 14" fill="none" stroke="#8e8e92" stroke-width="1.3"/></svg>
<svg class="a" style="left:724px;top:560px;" width="22" height="22" viewBox="0 0 22 22"><rect x="4.3" y="4.4" width="13.1" height="13" fill="none" stroke="#8a8a8e" stroke-width="1"/><circle cx="4.3" cy="4.4" r="1.4" fill="#222226" stroke="#8a8a8e" stroke-width="0.9"/><circle cx="17.4" cy="4.4" r="1.4" fill="#222226" stroke="#8a8a8e" stroke-width="0.9"/><circle cx="4.3" cy="17.4" r="1.4" fill="#222226" stroke="#8a8a8e" stroke-width="0.9"/><circle cx="17.4" cy="17.4" r="1.4" fill="#222226" stroke="#8a8a8e" stroke-width="0.9"/></svg>
<svg class="a" style="left:764px;top:560px;" width="22" height="22" viewBox="0 0 22 22"><circle cx="11.4" cy="11.3" r="7.1" fill="none" stroke="#8a8a8e" stroke-width="1"/><circle cx="11.4" cy="4.2" r="1.4" fill="#222226" stroke="#8a8a8e" stroke-width="0.9"/><circle cx="4.3" cy="11.3" r="1.4" fill="#222226" stroke="#8a8a8e" stroke-width="0.9"/><circle cx="18.5" cy="11.3" r="1.4" fill="#222226" stroke="#8a8a8e" stroke-width="0.9"/><circle cx="11.4" cy="18.4" r="1.4" fill="#222226" stroke="#8a8a8e" stroke-width="0.9"/></svg>
<svg class="a" style="left:802px;top:558px;" width="26" height="25" viewBox="0 0 26 25"><path d="M3.3 16.7 L16.5 3.4 M10.4 9.1 Q12 15 11.5 22.4 M10.4 9.1 Q18 9 23.6 13.3" fill="none" stroke="#8a8a8e" stroke-width="1"/><circle cx="16.5" cy="3.4" r="1.4" fill="#222226" stroke="#8a8a8e" stroke-width="0.9"/><circle cx="10.4" cy="9.1" r="1.4" fill="#222226" stroke="#8a8a8e" stroke-width="0.9"/><circle cx="3.3" cy="16.7" r="1.4" fill="#222226" stroke="#8a8a8e" stroke-width="0.9"/><circle cx="11.5" cy="22.4" r="1.4" fill="#222226" stroke="#8a8a8e" stroke-width="0.9"/><circle cx="23.6" cy="13.3" r="1.4" fill="#222226" stroke="#8a8a8e" stroke-width="0.9"/></svg>
<svg class="a" style="left:842px;top:562px;" width="26" height="18" viewBox="0 0 26 18"><path d="M2.5 15.4 Q9 2 23.3 13.4 M2.5 15.4 L5.5 4.4 L15.3 3.6 L23.3 13.4" fill="none" stroke="#8a8a8e" stroke-width="1"/><path d="M2.5 15.4 L5.5 4.4 L15.3 3.6 L23.3 13.4" fill="none" stroke="#8a8a8e" stroke-width="0.6" stroke-opacity="0.6"/><circle cx="2.5" cy="15.4" r="1.4" fill="#222226" stroke="#8a8a8e" stroke-width="0.9"/><circle cx="5.5" cy="4.4" r="1.4" fill="#222226" stroke="#8a8a8e" stroke-width="0.9"/><circle cx="15.3" cy="3.6" r="1.4" fill="#222226" stroke="#8a8a8e" stroke-width="0.9"/><circle cx="23.3" cy="13.4" r="1.4" fill="#222226" stroke="#8a8a8e" stroke-width="0.9"/></svg>
<svg class="a" style="left:880px;top:561px;" width="30" height="22" viewBox="0 0 30 22"><path d="M3 3 Q8 10 14 5 Q20 0 24.5 8 M2.5 12 Q5 20 12 14 Q19 8 23 15 Q26 18 28 13" fill="none" stroke="#8a8a8e" stroke-width="1.2"/><path d="M9.5 3 H27.6 M2.4 12.4 H20.5" stroke="#8a8a8e" stroke-width="0.6" stroke-opacity="0.5"/><circle cx="9.5" cy="3" r="1.4" fill="#222226" stroke="#8a8a8e" stroke-width="0.9"/><circle cx="18" cy="3" r="1.4" fill="#222226" stroke="#8a8a8e" stroke-width="0.9"/><circle cx="27.6" cy="3.4" r="1.4" fill="#222226" stroke="#8a8a8e" stroke-width="0.9"/><circle cx="2.4" cy="12.4" r="1.4" fill="#222226" stroke="#8a8a8e" stroke-width="0.9"/><circle cx="11.7" cy="12.4" r="1.4" fill="#222226" stroke="#8a8a8e" stroke-width="0.9"/><circle cx="20.5" cy="12.4" r="1.4" fill="#222226" stroke="#8a8a8e" stroke-width="0.9"/></svg>
<svg class="a" style="left:934px;top:560px;" width="24" height="23" viewBox="0 0 24 23"><circle cx="9" cy="2" r="0.85" fill="#8a8a8e"/><circle cx="12" cy="4" r="0.85" fill="#8a8a8e"/><circle cx="15" cy="3" r="0.85" fill="#8a8a8e"/><circle cx="18" cy="5" r="0.85" fill="#8a8a8e"/><circle cx="21" cy="6" r="0.85" fill="#8a8a8e"/><circle cx="8" cy="6" r="0.85" fill="#8a8a8e"/><circle cx="11" cy="8" r="0.85" fill="#8a8a8e"/><circle cx="14" cy="7" r="0.85" fill="#8a8a8e"/><circle cx="17" cy="9" r="0.85" fill="#8a8a8e"/><circle cx="10" cy="11" r="0.85" fill="#8a8a8e"/><circle cx="13" cy="12" r="0.85" fill="#8a8a8e"/><circle cx="16" cy="11" r="0.85" fill="#8a8a8e"/><circle cx="19" cy="8" r="0.85" fill="#8a8a8e"/><circle cx="7" cy="10" r="0.85" fill="#8a8a8e"/><circle cx="12" cy="15" r="0.85" fill="#8a8a8e"/><circle cx="9" cy="14" r="0.85" fill="#8a8a8e"/><circle cx="15" cy="14" r="0.85" fill="#8a8a8e"/><path d="M1.5 17 L10 13.5 L14.5 17.5 L6 21.5 Z" fill="none" stroke="#8a8a8e" stroke-width="1"/></svg>
<svg class="a" style="left:973px;top:560px;" width="27" height="23" viewBox="0 0 27 23"><rect x="2" y="1.2" width="1.6" height="1.6" fill="#8a8a8e"/><rect x="7" y="1.2" width="1.6" height="1.6" fill="#8a8a8e"/><rect x="12" y="1.2" width="1.6" height="1.6" fill="#8a8a8e"/><rect x="17" y="1.2" width="1.6" height="1.6" fill="#8a8a8e"/><rect x="22" y="1.2" width="1.6" height="1.6" fill="#8a8a8e"/><rect x="4.5" y="4.5" width="1.6" height="1.6" fill="#8a8a8e"/><rect x="9.5" y="4.5" width="1.6" height="1.6" fill="#8a8a8e"/><rect x="14.5" y="4.5" width="1.6" height="1.6" fill="#8a8a8e"/><path d="M3 14.5 Q3 19.5 8 19.5 Q12 19.5 12 15 L9 12 Q9.5 15.5 8 16 Q6 16.5 6 14.5 L8.5 11 L6 9 Z" fill="#8a8a8e"/><path d="M19 8 V21.5 M12.5 15 H25.5 M17 10 L19 8 L21 10 M17 19.5 L19 21.5 L21 19.5 M14.5 13 L12.5 15 L14.5 17 M23.5 13 L25.5 15 L23.5 17" fill="none" stroke="#8a8a8e" stroke-width="1"/></svg>
<div class="a" style="left:0px;top:596px;width:1498px;height:1px;background:#0a0a0b;"></div>
<div class="a" style="left:0px;top:597px;width:1498px;height:23px;background:#222226;"></div>
<div class="a" style="left:1px;top:597px;width:1px;height:363px;background:#0a0a0b;"></div>
<div class="t" style="top:602.84px;font-size:12px;line-height:12px;color:#f0f0f2;-webkit-text-stroke:0.3px #f0f0f2;letter-spacing:0.2px;left:9.5px;">Nodes</div>
<div class="a" style="left:3px;top:620px;width:1495px;height:1px;background:#0a0a0b;"></div>
<div class="a" style="left:2px;top:621px;width:1496px;height:339px;background:#28282d;"></div>
<div class="a" style="left:40px;top:621px;width:1px;height:339px;background:#212125;"></div>
<div class="a" style="left:123px;top:621px;width:1px;height:339px;background:#212125;"></div>
<div class="a" style="left:205px;top:621px;width:1px;height:339px;background:#212125;"></div>
<div class="a" style="left:288px;top:621px;width:1px;height:339px;background:#212125;"></div>
<div class="a" style="left:370px;top:621px;width:1px;height:339px;background:#212125;"></div>
<div class="a" style="left:453px;top:621px;width:1px;height:339px;background:#212125;"></div>
<div class="a" style="left:535px;top:621px;width:1px;height:339px;background:#212125;"></div>
<div class="a" style="left:618px;top:621px;width:1px;height:339px;background:#212125;"></div>
<div class="a" style="left:700px;top:621px;width:1px;height:339px;background:#212125;"></div>
<div class="a" style="left:783px;top:621px;width:1px;height:339px;background:#212125;"></div>
<div class="a" style="left:865px;top:621px;width:1px;height:339px;background:#212125;"></div>
<div class="a" style="left:948px;top:621px;width:1px;height:339px;background:#212125;"></div>
<div class="a" style="left:1030px;top:621px;width:1px;height:339px;background:#212125;"></div>
<div class="a" style="left:1113px;top:621px;width:1px;height:339px;background:#212125;"></div>
<div class="a" style="left:1195px;top:621px;width:1px;height:339px;background:#212125;"></div>
<div class="a" style="left:1278px;top:621px;width:1px;height:339px;background:#212125;"></div>
<div class="a" style="left:1360px;top:621px;width:1px;height:339px;background:#212125;"></div>
<div class="a" style="left:1443px;top:621px;width:1px;height:339px;background:#212125;"></div>
<div class="a" style="left:2px;top:642px;width:1496px;height:1px;background:#212125;"></div>
<div class="a" style="left:2px;top:696px;width:1496px;height:1px;background:#212125;"></div>
<div class="a" style="left:2px;top:751px;width:1496px;height:1px;background:#212125;"></div>
<div class="a" style="left:2px;top:805px;width:1496px;height:1px;background:#212125;"></div>
<div class="a" style="left:2px;top:860px;width:1496px;height:1px;background:#212125;"></div>
<div class="a" style="left:2px;top:914px;width:1496px;height:1px;background:#212125;"></div>
<div class="a" style="left:1498px;top:66px;width:1px;height:894px;background:#0a0a0b;"></div>
<svg class="a" style="left:380px;top:700px;" width="840" height="170" viewBox="0 0 840 170"><path d="M82 47 L84.5 126" stroke="#2aa7e0" stroke-width="2"/><path d="M158 147 L688 137" stroke="#e8c22a" stroke-width="2"/></svg>
<svg class="a" style="left:398px;top:720px;" width="12" height="13" viewBox="0 0 12 13"><path d="M1.5 1.5 L10.5 6.5 L1.5 11.5Z" fill="#2aa7e0" stroke="#0a0a0a" stroke-width="1"/></svg>
<div class="a" style="left:410px;top:715px;width:105px;height:22px;background:#0a0a0c;border-radius:3px;box-shadow:0 2px 4px rgba(0,0,0,0.45)"></div>
<div class="a" style="left:411px;top:716px;width:103px;height:17px;background:#35363b;border-radius:2px 2px 0 0"></div>
<div class="a" style="left:411px;top:734px;width:103px;height:2px;background:#b07a08;"></div>
<div class="t" style="top:719.27px;font-size:11.5px;line-height:11.5px;color:#f0f0f2;left:62.5px;width:800px;text-align:center;">Ellipse1</div>
<div class="a" style="left:457px;top:738px;width:10px;height:9px;background:#f4f4f4;border:1px solid #0a0a0a"></div>
<svg class="a" style="left:459px;top:824px;" width="11" height="9" viewBox="0 0 11 9"><path d="M1 1 L10 1 L5.5 8Z" fill="#2aa7e0"/></svg>
<div class="a" style="left:398px;top:832px;width:131px;height:29px;border:1.4px solid #e0493c;border-radius:6px;background:#0a0a0c"></div>
<div class="a" style="left:400px;top:834px;width:127px;height:21.5px;background:#3e3f44;border-radius:3px 3px 0 0"></div>
<div class="a" style="left:400px;top:856.5px;width:127px;height:2.5px;background:#6aaa22;border-radius:0 0 3px 3px"></div>
<div class="t" style="top:839.77px;font-size:11.5px;line-height:11.5px;color:#f0f0f2;left:63px;width:800px;text-align:center;">Background1</div>
<div class="a" style="left:529px;top:842px;width:10px;height:10px;background:#f4f4f4;border:1px solid #0a0a0a"></div>
<div class="a" style="left:381px;top:822px;width:168px;height:53px;border:3px solid #b6e11e"></div>
<svg class="a" style="left:1063px;top:831px;" width="11" height="13" viewBox="0 0 11 13"><path d="M1 1 L10 6.5 L1 12Z" fill="#e8c22a" stroke="#0a0a0a" stroke-width="0.8"/></svg>
<div class="a" style="left:1074px;top:824px;width:129px;height:27px;background:#0a0a0c;border-radius:3px;box-shadow:0 2px 4px rgba(0,0,0,0.45)"></div>
<div class="a" style="left:1075px;top:825px;width:127px;height:22px;background:#2c2d32;border-radius:2px 2px 0 0"></div>
<div class="a" style="left:1075px;top:848px;width:127px;height:2px;background:#6aaee8;"></div>
<div class="t" style="top:831.27px;font-size:11.5px;line-height:11.5px;color:#f0f0f2;left:738px;width:800px;text-align:center;">MediaOut1</div>
<div class="a" style="left:1204px;top:833px;width:9px;height:9px;background:#9a9a9a;border:1px solid #0a0a0a"></div>
<div class="a" style="left:1081px;top:850px;width:20px;height:11px;background:#2a2a2e;border-radius:0 0 3px 3px;box-shadow:0 1px 2px rgba(0,0,0,0.6)"></div>
<div class="a" style="left:1084px;top:853px;width:6px;height:6px;border-radius:3px;background:#050505"></div>
<div class="a" style="left:1092px;top:853px;width:6px;height:6px;border-radius:3px;background:#f4f4f4;border:1px solid #111"></div>
<div class="a" style="left:1499px;top:66px;width:421px;height:23px;background:#222226;"></div>
<div class="t" style="top:71.84px;font-size:12px;line-height:12px;color:#f0f0f2;-webkit-text-stroke:0.3px #f0f0f2;letter-spacing:0.2px;left:1507px;">Inspector</div>
<div class="a" style="left:1882px;top:66px;width:1px;height:23px;background:#141417;"></div>
<div class="a" style="left:1892px;top:76px;width:4px;height:4px;border-radius:2px;background:#9a9a9e"></div>
<div class="a" style="left:1899.5px;top:76px;width:4px;height:4px;border-radius:2px;background:#9a9a9e"></div>
<div class="a" style="left:1907px;top:76px;width:4px;height:4px;border-radius:2px;background:#9a9a9e"></div>
<div class="a" style="left:1499px;top:89px;width:421px;height:1px;background:#0a0a0b;"></div>
<div class="a" style="left:1499px;top:90px;width:421px;height:870px;background:#28282d;"></div>
<div class="a" style="left:1509px;top:99px;width:400px;height:22px;background:#202024;border:1px solid #0a0a0b;border-radius:3px"></div>
<div class="a" style="left:1510px;top:100px;width:199px;height:20px;background:#19191c;border-radius:2px 0 0 2px"></div>
<div class="t" style="top:104.42px;font-size:12.5px;line-height:12.5px;color:#f0f0f2;left:1209px;width:800px;text-align:center;">Tools</div>
<div class="t" style="top:104.42px;font-size:12.5px;line-height:12.5px;color:#46464a;left:1408px;width:800px;text-align:center;">Modifiers</div>
<div class="a" style="left:1499px;top:122px;width:421px;height:38px;background:#27272c;"></div>
<div class="a" style="left:1514px;top:138px;width:24px;height:14px;border-radius:7px;background:#141416"></div>
<div class="a" style="left:1527px;top:141px;width:8px;height:8px;border-radius:4px;background:#e8453a"></div>
<div class="t" style="top:138.74px;font-size:13.3px;line-height:13.3px;color:#ececee;left:1548px;">Background1</div>
<div class="a" style="left:1747px;top:140px;width:10px;height:10px;border-radius:5px;background:#5aa828"></div>
<svg class="a" style="left:1765.0px;top:141.2px;" width="10.1" height="7.7" viewBox="0 0 10.1 7.7"><path d="M1 1.5 L5.05 6.18 L9.10 1.5" fill="none" stroke="#8a8a8e" stroke-width="1.2"/></svg>
<div class="a" style="left:1787px;top:135px;width:1px;height:20px;background:#0a0a0b;"></div>
<svg class="a" style="left:1800px;top:137px;" width="18" height="16" viewBox="0 0 18 16"><rect x="1.5" y="5.5" width="13" height="9" rx="1.5" fill="none" stroke="#6e6e72" stroke-width="1.2"/><path d="M4 3 H15 a1.5 1.5 0 0 1 1.5 1.5 V11" fill="none" stroke="#6e6e72" stroke-width="1.2"/></svg>
<svg class="a" style="left:1827px;top:136px;" width="18" height="18" viewBox="0 0 18 18"><path d="M11 1.5 L16.5 7 L14.5 8 L10 12.5 L9.5 15 L3 8.5 L5.5 8 L10 3.5Z" fill="#6e6e72"/><path d="M6 12 L1.5 16.5" stroke="#6e6e72" stroke-width="1.5"/></svg>
<svg class="a" style="left:1857px;top:136px;" width="16" height="18" viewBox="0 0 16 18"><path d="M4 8.5 V6 a4 4 0 0 1 8 0 V6.5" fill="none" stroke="#6e6e72" stroke-width="1.3"/><rect x="2" y="8.5" width="12" height="8" rx="1.5" fill="none" stroke="#6e6e72" stroke-width="1.3"/></svg>
<svg class="a" style="left:1884px;top:136px;" width="18" height="18" viewBox="0 0 18 18"><path d="M3 9 A6.5 6.5 0 1 0 5 4.5" fill="none" stroke="#6e6e72" stroke-width="1.3"/><path d="M2 2.5 L5 4.7 L2.5 7" fill="none" stroke="#6e6e72" stroke-width="1.3"/><path d="M9.5 6 V12 M6.5 9 H12.5" stroke="#6e6e72" stroke-width="1.3"/></svg>
<div class="a" style="left:1499px;top:160px;width:421px;height:1px;background:#141416;"></div>
<div class="a" style="left:1499px;top:161px;width:421px;height:56px;background:#28282d;"></div>
<div class="t" style="top:172.84px;font-size:12px;line-height:12px;color:#b0b0b4;right:274px;text-align:right;">Global In/Out</div>
<div class="a" style="left:1661px;top:177px;width:197px;height:3px;background:#5a5a5e;"></div>
<div class="a" style="left:1656px;top:174px;width:10px;height:10px;border-radius:5px;background:#a0a0a4"></div>
<div class="a" style="left:1848px;top:174px;width:10px;height:10px;border-radius:5px;background:#a0a0a4"></div>
<div class="a" style="left:1656px;top:189px;width:55px;height:20px;background:#1b1b1d;border:1px solid #0b0b0c;border-radius:3px"></div>
<div class="t" style="top:193.00px;font-size:13px;line-height:13px;color:#f2f2f4;left:1282px;width:800px;text-align:center;">0</div>
<div class="t" style="top:193.84px;font-size:12px;line-height:12px;color:#8a8a8e;left:1357.5px;width:800px;text-align:center;">676</div>
<div class="a" style="left:1804px;top:189px;width:55px;height:20px;background:#1b1b1d;border:1px solid #0b0b0c;border-radius:3px"></div>
<div class="t" style="top:193.00px;font-size:13px;line-height:13px;color:#f2f2f4;left:1430px;width:800px;text-align:center;">675</div>
<div class="a" style="left:1499px;top:217px;width:421px;height:1px;background:#141416;"></div>
<svg class="a" style="left:1636px;top:224px;" width="26" height="24" viewBox="0 0 26 24"><circle cx="9.6" cy="4.4" r="1.95" fill="#e8e8ea"/><circle cx="15.6" cy="3.9" r="1.95" fill="#4e4e52"/><circle cx="20.0" cy="7.4" r="1.95" fill="#6e6e72"/><circle cx="21.0" cy="13.3" r="1.95" fill="#7e7e82"/><circle cx="17.3" cy="18.3" r="1.95" fill="#8e8e92"/><circle cx="11.4" cy="19.0" r="1.95" fill="#a0a0a4"/><circle cx="6.7" cy="15.3" r="1.95" fill="#b0b0b4"/><circle cx="5.9" cy="9.3" r="1.95" fill="#c0c0c4"/><circle cx="13.4" cy="11.5" r="1.95" fill="#f4f4f6"/></svg>
<div class="t" style="top:249.84px;font-size:12px;line-height:12px;color:#f0f0f2;left:1249px;width:800px;text-align:center;">Color</div>
<div class="a" style="left:1619px;top:268px;width:60px;height:2px;background:#e0453a;"></div>
<svg class="a" style="left:1695px;top:225px;" width="28" height="20" viewBox="0 0 28 20"><path d="M2 8.3 L10 13.8 L18 8.3 L26 13.8 V17.7 H4.5 V10Z" fill="#333337"/><rect x="4.5" y="2.5" width="20.5" height="15.2" fill="none" stroke="#7a7a7e" stroke-width="1.2"/><path d="M2 8.3 L10 13.8 L18 8.3 L26 13.8" fill="none" stroke="#7a7a7e" stroke-width="1.2"/><circle cx="9.5" cy="7.4" r="1.3" fill="#7a7a7e"/></svg>
<div class="t" style="top:249.84px;font-size:12px;line-height:12px;color:#8a8a8e;left:1309px;width:800px;text-align:center;">Image</div>
<svg class="a" style="left:1756px;top:225px;" width="28" height="20" viewBox="0 0 28 20"><defs><linearGradient id="sg" x1="0" x2="1"><stop offset="0" stop-color="#2a2a2e"/><stop offset="1" stop-color="#3c3c40"/></linearGradient></defs><rect x="1.5" y="2.5" width="20.5" height="15.2" fill="url(#sg)" stroke="#7a7a7e" stroke-width="1.2"/><circle cx="20.8" cy="12.3" r="5.6" fill="#28282d"/><rect x="19.1" y="5.6" width="2" height="2.6" fill="#8a8a8e" transform="rotate(0 20.1 12.3)"/><rect x="19.1" y="5.6" width="2" height="2.6" fill="#8a8a8e" transform="rotate(45 20.1 12.3)"/><rect x="19.1" y="5.6" width="2" height="2.6" fill="#8a8a8e" transform="rotate(90 20.1 12.3)"/><rect x="19.1" y="5.6" width="2" height="2.6" fill="#8a8a8e" transform="rotate(135 20.1 12.3)"/><rect x="19.1" y="5.6" width="2" height="2.6" fill="#8a8a8e" transform="rotate(180 20.1 12.3)"/><rect x="19.1" y="5.6" width="2" height="2.6" fill="#8a8a8e" transform="rotate(225 20.1 12.3)"/><rect x="19.1" y="5.6" width="2" height="2.6" fill="#8a8a8e" transform="rotate(270 20.1 12.3)"/><rect x="19.1" y="5.6" width="2" height="2.6" fill="#8a8a8e" transform="rotate(315 20.1 12.3)"/><circle cx="20.1" cy="12.3" r="3.4" fill="none" stroke="#8a8a8e" stroke-width="2"/></svg>
<div class="t" style="top:249.84px;font-size:12px;line-height:12px;color:#8a8a8e;left:1369px;width:800px;text-align:center;">Settings</div>
<div class="a" style="left:1499px;top:270px;width:421px;height:1px;background:#141416;"></div>
<div class="t" style="top:282.84px;font-size:12px;line-height:12px;color:#b0b0b4;right:274px;text-align:right;">Type</div>
<div class="a" style="left:1656px;top:279px;width:203px;height:20px;background:#1b1b1d;border:1px solid #0b0b0c;border-radius:3px"></div>
<div class="t" style="top:283.34px;font-size:12px;line-height:12px;color:#f0f0f2;left:1664px;">Solid Color</div>
<svg class="a" style="left:1840.5px;top:284.4px;" width="11.0" height="8.2" viewBox="0 0 11.0 8.2"><path d="M1 1.5 L5.50 6.70 L10.00 1.5" fill="none" stroke="#8a8a8e" stroke-width="1.2"/></svg>
<div class="a" style="left:1880.5px;top:286.0px;width:7px;height:7px;background:#a8a8ac;transform:rotate(45deg)"></div>
<div class="a" style="left:1499px;top:307px;width:405px;height:1px;background:#141416;"></div>
<div class="t" style="top:317.42px;font-size:12.5px;line-height:12.5px;color:#b8b8bc;left:1535px;">Background</div>
<div class="t" style="top:342.84px;font-size:12px;line-height:12px;color:#b0b0b4;right:274px;text-align:right;">Color</div>
<svg class="a" style="left:1658px;top:343px;" width="10" height="12" viewBox="0 0 10 12"><path d="M2 1.5 L7 6 L2 10.5" fill="none" stroke="#8a8a8e" stroke-width="1.2"/></svg>
<div class="a" style="left:1681px;top:339px;width:74px;height:20px;background:#ff55ff;border:1px solid #111;border-radius:2px"></div>
<svg class="a" style="left:1768px;top:341px;" width="18" height="18" viewBox="0 0 18 18"><path d="M2.3 16.5 L12.5 6.3" stroke="#7e7e82" stroke-width="3" stroke-linecap="round"/><path d="M10.2 4 L14.8 8.6" stroke="#7e7e82" stroke-width="2"/><path d="M13 5.5 L16.2 2.3" stroke="#7e7e82" stroke-width="3.2" stroke-linecap="round"/></svg>
<div class="a" style="left:1880.5px;top:346.0px;width:7px;height:7px;background:#a8a8ac;transform:rotate(45deg)"></div>
<div class="t" style="top:368.34px;font-size:12px;line-height:12px;color:#b0b0b4;right:274px;text-align:right;">Red</div>
<div class="a" style="left:1657px;top:371.5px;width:136px;height:3px;background:#151517;border-radius:2px"></div>
<div class="a" style="left:1783.5px;top:368.5px;width:9px;height:9px;border-radius:5px;background:#c8241e"></div>
<div class="a" style="left:1804px;top:364px;width:55px;height:20px;background:#1b1b1d;border:1px solid #0b0b0c;border-radius:3px;overflow:hidden"></div>
<div class="t" style="top:368.42px;font-size:12.5px;line-height:12.5px;color:#f2f2f4;left:1430px;width:800px;text-align:center;">1.0</div>
<div class="a" style="left:1880.5px;top:371.0px;width:7px;height:7px;background:#a8a8ac;transform:rotate(45deg)"></div>
<div class="t" style="top:393.34px;font-size:12px;line-height:12px;color:#b0b0b4;right:274px;text-align:right;">Green</div>
<div class="a" style="left:1657px;top:396.5px;width:136px;height:3px;background:#151517;border-radius:2px"></div>
<div class="a" style="left:1698.5px;top:393.5px;width:9px;height:9px;border-radius:5px;background:#1e8a2a"></div>
<div class="a" style="left:1804px;top:389px;width:55px;height:20px;background:#1b1b1d;border:1px solid #0b0b0c;border-radius:3px;overflow:hidden"></div>
<div class="a" style="left:1805px;top:390px;width:53px;height:19px;overflow:hidden"><div class="t" style="left:3px;top:3.42px;font-size:12.5px;line-height:12.5px;color:#f2f2f4">0.333333</div></div>
<div class="a" style="left:1880.5px;top:396.0px;width:7px;height:7px;background:#a8a8ac;transform:rotate(45deg)"></div>
<div class="t" style="top:418.34px;font-size:12px;line-height:12px;color:#b0b0b4;right:274px;text-align:right;">Blue</div>
<div class="a" style="left:1657px;top:421.5px;width:136px;height:3px;background:#151517;border-radius:2px"></div>
<div class="a" style="left:1783.5px;top:418.5px;width:9px;height:9px;border-radius:5px;background:#1a52a8"></div>
<div class="a" style="left:1804px;top:414px;width:55px;height:20px;background:#1b1b1d;border:1px solid #0b0b0c;border-radius:3px;overflow:hidden"></div>
<div class="t" style="top:418.42px;font-size:12.5px;line-height:12.5px;color:#f2f2f4;left:1430px;width:800px;text-align:center;">1.0</div>
<div class="a" style="left:1880.5px;top:421.0px;width:7px;height:7px;background:#a8a8ac;transform:rotate(45deg)"></div>
<div class="t" style="top:443.34px;font-size:12px;line-height:12px;color:#b0b0b4;right:274px;text-align:right;">Alpha</div>
<div class="a" style="left:1657px;top:446.5px;width:136px;height:3px;background:#151517;border-radius:2px"></div>
<div class="a" style="left:1783.5px;top:443.5px;width:9px;height:9px;border-radius:5px;background:#9a9a9e"></div>
<div class="a" style="left:1804px;top:439px;width:55px;height:20px;background:#1b1b1d;border:1px solid #0b0b0c;border-radius:3px;overflow:hidden"></div>
<div class="t" style="top:443.42px;font-size:12.5px;line-height:12.5px;color:#f2f2f4;left:1430px;width:800px;text-align:center;">1.0</div>
<div class="a" style="left:1880.5px;top:446.0px;width:7px;height:7px;background:#a8a8ac;transform:rotate(45deg)"></div>
<div class="a" style="left:1499px;top:469px;width:421px;height:1px;background:#141416;"></div>
<div class="a" style="left:1005px;top:307px;width:523px;height:430px;border-radius:8px;background:#28282e;border:1px solid #4a4a50;box-shadow:0 4px 18px rgba(0,0,0,0.45)"></div>
<div class="a" style="left:1006px;top:307px;width:521px;height:30px;border-radius:7px 7px 0 0;background:#e6f4f6"></div>
<svg class="a" style="left:1016px;top:315px;" width="12" height="12" viewBox="0 0 12 12"><rect x="0" y="0" width="12" height="12" rx="2.5" fill="#1d3553"/><circle cx="6" cy="3.6" r="1.9" fill="#2ec7f0"/><circle cx="3.6" cy="7.8" r="1.9" fill="#e6e21c"/><circle cx="8.4" cy="7.8" r="1.9" fill="#f04a3c"/></svg>
<div class="t" style="top:316.42px;font-size:12.5px;line-height:12.5px;color:#111111;left:1036px;">Color</div>
<svg class="a" style="left:1507px;top:315px;" width="12" height="12" viewBox="0 0 12 12"><path d="M1 1 L11 11 M11 1 L1 11" stroke="#111" stroke-width="1.1"/></svg>
<div class="t" style="top:350.84px;font-size:12px;line-height:12px;color:#a8a8ae;left:1017px;">Basic colors</div>
<div class="a" style="left:1020px;top:374px;width:22px;height:18px;background:#000000;border:1px solid #0c0c0c"></div>
<div class="a" style="left:1048px;top:374px;width:22px;height:18px;background:#aa0000;border:1px solid #0c0c0c"></div>
<div class="a" style="left:1076px;top:374px;width:22px;height:18px;background:#005500;border:1px solid #0c0c0c"></div>
<div class="a" style="left:1104px;top:374px;width:22px;height:18px;background:#aa5500;border:1px solid #0c0c0c"></div>
<div class="a" style="left:1132px;top:374px;width:22px;height:18px;background:#00aa00;border:1px solid #0c0c0c"></div>
<div class="a" style="left:1160px;top:374px;width:22px;height:18px;background:#aaaa00;border:1px solid #0c0c0c"></div>
<div class="a" style="left:1188px;top:374px;width:22px;height:18px;background:#00ff00;border:1px solid #0c0c0c"></div>
<div class="a" style="left:1216px;top:374px;width:22px;height:18px;background:#aaff00;border:1px solid #0c0c0c"></div>
<div class="a" style="left:1020px;top:398px;width:22px;height:18px;background:#000080;border:1px solid #0c0c0c"></div>
<div class="a" style="left:1048px;top:398px;width:22px;height:18px;background:#aa007f;border:1px solid #0c0c0c"></div>
<div class="a" style="left:1076px;top:398px;width:22px;height:18px;background:#00557f;border:1px solid #0c0c0c"></div>
<div class="a" style="left:1104px;top:398px;width:22px;height:18px;background:#aa557f;border:1px solid #0c0c0c"></div>
<div class="a" style="left:1132px;top:398px;width:22px;height:18px;background:#00aa7f;border:1px solid #0c0c0c"></div>
<div class="a" style="left:1160px;top:398px;width:22px;height:18px;background:#aaaa7f;border:1px solid #0c0c0c"></div>
<div class="a" style="left:1188px;top:398px;width:22px;height:18px;background:#00ff7f;border:1px solid #0c0c0c"></div>
<div class="a" style="left:1216px;top:398px;width:22px;height:18px;background:#aaff7f;border:1px solid #0c0c0c"></div>
<div class="a" style="left:1020px;top:422px;width:22px;height:18px;background:#0000ff;border:1px solid #0c0c0c"></div>
<div class="a" style="left:1048px;top:422px;width:22px;height:18px;background:#aa00ff;border:1px solid #0c0c0c"></div>
<div class="a" style="left:1076px;top:422px;width:22px;height:18px;background:#0055ff;border:1px solid #0c0c0c"></div>
<div class="a" style="left:1104px;top:422px;width:22px;height:18px;background:#aa55ff;border:1px solid #0c0c0c"></div>
<div class="a" style="left:1132px;top:422px;width:22px;height:18px;background:#00aaff;border:1px solid #0c0c0c"></div>
<div class="a" style="left:1160px;top:422px;width:22px;height:18px;background:#aaaaff;border:1px solid #0c0c0c"></div>
<div class="a" style="left:1188px;top:422px;width:22px;height:18px;background:#00ffff;border:1px solid #0c0c0c"></div>
<div class="a" style="left:1216px;top:422px;width:22px;height:18px;background:#aaffff;border:1px solid #0c0c0c"></div>
<div class="a" style="left:1020px;top:446px;width:22px;height:18px;background:#550000;border:1px solid #0c0c0c"></div>
<div class="a" style="left:1048px;top:446px;width:22px;height:18px;background:#ff0000;border:1px solid #0c0c0c"></div>
<div class="a" style="left:1076px;top:446px;width:22px;height:18px;background:#555500;border:1px solid #0c0c0c"></div>
<div class="a" style="left:1104px;top:446px;width:22px;height:18px;background:#ff5500;border:1px solid #0c0c0c"></div>
<div class="a" style="left:1132px;top:446px;width:22px;height:18px;background:#55aa00;border:1px solid #0c0c0c"></div>
<div class="a" style="left:1160px;top:446px;width:22px;height:18px;background:#ffaa00;border:1px solid #0c0c0c"></div>
<div class="a" style="left:1188px;top:446px;width:22px;height:18px;background:#55ff00;border:1px solid #0c0c0c"></div>
<div class="a" style="left:1216px;top:446px;width:22px;height:18px;background:#ffff00;border:1px solid #0c0c0c"></div>
<div class="a" style="left:1020px;top:470px;width:22px;height:18px;background:#55007f;border:1px solid #0c0c0c"></div>
<div class="a" style="left:1048px;top:470px;width:22px;height:18px;background:#ff007f;border:1px solid #0c0c0c"></div>
<div class="a" style="left:1076px;top:470px;width:22px;height:18px;background:#55557f;border:1px solid #0c0c0c"></div>
<div class="a" style="left:1104px;top:470px;width:22px;height:18px;background:#ff557f;border:1px solid #0c0c0c"></div>
<div class="a" style="left:1132px;top:470px;width:22px;height:18px;background:#55aa7f;border:1px solid #0c0c0c"></div>
<div class="a" style="left:1160px;top:470px;width:22px;height:18px;background:#ffaa7f;border:1px solid #0c0c0c"></div>
<div class="a" style="left:1188px;top:470px;width:22px;height:18px;background:#55ff7f;border:1px solid #0c0c0c"></div>
<div class="a" style="left:1216px;top:470px;width:22px;height:18px;background:#ffff7f;border:1px solid #0c0c0c"></div>
<div class="a" style="left:1020px;top:494px;width:22px;height:18px;background:#5500ff;border:1px solid #0c0c0c"></div>
<div class="a" style="left:1048px;top:494px;width:22px;height:18px;background:#ff00ff;border:1px solid #0c0c0c"></div>
<div class="a" style="left:1076px;top:494px;width:22px;height:18px;background:#5555ff;border:1px solid #0c0c0c"></div>
<div class="a" style="left:1104px;top:494px;width:22px;height:18px;background:#ff55ff;border:1px solid #0c0c0c"></div>
<div class="a" style="left:1132px;top:494px;width:22px;height:18px;background:#55aaff;border:1px solid #0c0c0c"></div>
<div class="a" style="left:1160px;top:494px;width:22px;height:18px;background:#ffaaff;border:1px solid #0c0c0c"></div>
<div class="a" style="left:1188px;top:494px;width:22px;height:18px;background:#55ffff;border:1px solid #0c0c0c"></div>
<div class="a" style="left:1216px;top:494px;width:22px;height:18px;background:#ffffff;border:1px solid #0c0c0c"></div>
<div class="a" style="left:1096px;top:487px;width:36px;height:34px;border:3px solid #b6e11e"></div>
<div class="a" style="left:1017px;top:521px;width:224px;height:23px;border:1px solid #45464c;border-radius:12px"></div>
<div class="t" style="top:526.84px;font-size:12px;line-height:12px;color:#b4b4ba;left:729px;width:800px;text-align:center;">Pick Screen Color</div>
<div class="t" style="top:592.84px;font-size:12px;line-height:12px;color:#a8a8ae;left:1017px;">Custom colors</div>
<div class="a" style="left:1020px;top:616px;width:22px;height:18px;background:#ffffff;border:1px solid #0c0c0c"></div>
<div class="a" style="left:1048px;top:616px;width:22px;height:18px;background:#ffffff;border:1px solid #0c0c0c"></div>
<div class="a" style="left:1076px;top:616px;width:22px;height:18px;background:#ffffff;border:1px solid #0c0c0c"></div>
<div class="a" style="left:1104px;top:616px;width:22px;height:18px;background:#ffffff;border:1px solid #0c0c0c"></div>
<div class="a" style="left:1132px;top:616px;width:22px;height:18px;background:#ffffff;border:1px solid #0c0c0c"></div>
<div class="a" style="left:1160px;top:616px;width:22px;height:18px;background:#ffffff;border:1px solid #0c0c0c"></div>
<div class="a" style="left:1188px;top:616px;width:22px;height:18px;background:#ffffff;border:1px solid #0c0c0c"></div>
<div class="a" style="left:1216px;top:616px;width:22px;height:18px;background:#ffffff;border:1px solid #0c0c0c"></div>
<div class="a" style="left:1020px;top:640px;width:22px;height:18px;background:#ffffff;border:1px solid #0c0c0c"></div>
<div class="a" style="left:1048px;top:640px;width:22px;height:18px;background:#ffffff;border:1px solid #0c0c0c"></div>
<div class="a" style="left:1076px;top:640px;width:22px;height:18px;background:#ffffff;border:1px solid #0c0c0c"></div>
<div class="a" style="left:1104px;top:640px;width:22px;height:18px;background:#ffffff;border:1px solid #0c0c0c"></div>
<div class="a" style="left:1132px;top:640px;width:22px;height:18px;background:#ffffff;border:1px solid #0c0c0c"></div>
<div class="a" style="left:1160px;top:640px;width:22px;height:18px;background:#ffffff;border:1px solid #0c0c0c"></div>
<div class="a" style="left:1188px;top:640px;width:22px;height:18px;background:#ffffff;border:1px solid #0c0c0c"></div>
<div class="a" style="left:1216px;top:640px;width:22px;height:18px;background:#ffffff;border:1px solid #0c0c0c"></div>
<div class="a" style="left:1017px;top:667px;width:224px;height:23px;border:1px solid #45464c;border-radius:12px"></div>
<div class="t" style="top:672.84px;font-size:12px;line-height:12px;color:#b4b4ba;left:729px;width:800px;text-align:center;">Add to Custom Colors</div>
<div class="a" style="left:1253px;top:357px;width:222px;height:202px;background:#141416"></div>
<div class="a" style="left:1254px;top:358px;width:220px;height:200px;background:linear-gradient(rgba(200,200,200,0),rgb(200,200,200)),linear-gradient(90deg,#c80000,#c800c8 16.667%,#0000c8 33.333%,#00c8c8 50%,#00c800 66.667%,#c8c800 83.333%,#c80000)"></div>
<svg class="a" style="left:1280px;top:414px;" width="22" height="22" viewBox="0 0 22 22"><path d="M11 1 V21 M1 11 H21" stroke="#000" stroke-width="2"/></svg>
<div class="a" style="left:1491px;top:357px;width:15px;height:202px;background:#141416"></div>
<div class="a" style="left:1492px;top:358px;width:13px;height:200px;background:linear-gradient(#ff55ff,#000)"></div>
<svg class="a" style="left:1505px;top:353px;" width="8" height="11" viewBox="0 0 8 11"><path d="M7 0.5 L1 5.5 L7 10.5Z" fill="#9a9a9e"/></svg>
<div class="a" style="left:1253px;top:583px;width:60px;height:107px;background:#ff55ff;border:1px solid #141416"></div>
<div class="t" style="top:588.34px;font-size:12px;line-height:12px;color:#a0a0a6;right:562px;text-align:right;">Hue:</div>
<div class="a" style="left:1364px;top:584.5px;width:48px;height:19px;background:#1b1b1d;border:1px solid #0b0b0c;border-radius:3px"></div>
<div class="t" style="top:588.42px;font-size:12.5px;line-height:12.5px;color:#f4f4f6;left:1369px;">300</div>
<svg class="a" style="left:1400px;top:586px;" width="10" height="17" viewBox="0 0 10 17"><path d="M1.5 6.5 L5 3 L8.5 6.5Z" fill="#a0a0a4"/><path d="M1.5 10.5 L5 14 L8.5 10.5Z" fill="#a0a0a4"/></svg>
<div class="t" style="top:615.34px;font-size:12px;line-height:12px;color:#a0a0a6;right:562px;text-align:right;">Sat:</div>
<div class="a" style="left:1364px;top:611.5px;width:48px;height:19px;background:#1b1b1d;border:1px solid #0b0b0c;border-radius:3px"></div>
<div class="t" style="top:615.42px;font-size:12.5px;line-height:12.5px;color:#f4f4f6;left:1369px;">170</div>
<svg class="a" style="left:1400px;top:613px;" width="10" height="17" viewBox="0 0 10 17"><path d="M1.5 6.5 L5 3 L8.5 6.5Z" fill="#a0a0a4"/><path d="M1.5 10.5 L5 14 L8.5 10.5Z" fill="#a0a0a4"/></svg>
<div class="t" style="top:642.34px;font-size:12px;line-height:12px;color:#a0a0a6;right:562px;text-align:right;">Val:</div>
<div class="a" style="left:1364px;top:638.5px;width:48px;height:19px;background:#1b1b1d;border:1px solid #0b0b0c;border-radius:3px"></div>
<div class="t" style="top:642.42px;font-size:12.5px;line-height:12.5px;color:#f4f4f6;left:1369px;">255</div>
<svg class="a" style="left:1400px;top:640px;" width="10" height="17" viewBox="0 0 10 17"><path d="M1.5 6.5 L5 3 L8.5 6.5Z" fill="#4a4a4e"/><path d="M1.5 10.5 L5 14 L8.5 10.5Z" fill="#a0a0a4"/></svg>
<div class="t" style="top:588.34px;font-size:12px;line-height:12px;color:#a0a0a6;right:463.5px;text-align:right;">Red:</div>
<div class="a" style="left:1463px;top:584.5px;width:48px;height:19px;background:#1b1b1d;border:1px solid #0b0b0c;border-radius:3px"></div>
<div class="t" style="top:588.42px;font-size:12.5px;line-height:12.5px;color:#f4f4f6;left:1468px;">255</div>
<svg class="a" style="left:1499px;top:586px;" width="10" height="17" viewBox="0 0 10 17"><path d="M1.5 6.5 L5 3 L8.5 6.5Z" fill="#4a4a4e"/><path d="M1.5 10.5 L5 14 L8.5 10.5Z" fill="#a0a0a4"/></svg>
<div class="t" style="top:615.34px;font-size:12px;line-height:12px;color:#a0a0a6;right:463.5px;text-align:right;">Green:</div>
<div class="a" style="left:1463px;top:611.5px;width:48px;height:19px;background:#1b1b1d;border:1px solid #0b0b0c;border-radius:3px"></div>
<div class="t" style="top:615.42px;font-size:12.5px;line-height:12.5px;color:#f4f4f6;left:1468px;">85</div>
<svg class="a" style="left:1499px;top:613px;" width="10" height="17" viewBox="0 0 10 17"><path d="M1.5 6.5 L5 3 L8.5 6.5Z" fill="#a0a0a4"/><path d="M1.5 10.5 L5 14 L8.5 10.5Z" fill="#a0a0a4"/></svg>
<div class="t" style="top:642.34px;font-size:12px;line-height:12px;color:#a0a0a6;right:463.5px;text-align:right;">Blue:</div>
<div class="a" style="left:1463px;top:638.5px;width:48px;height:19px;background:#1b1b1d;border:1px solid #0b0b0c;border-radius:3px"></div>
<div class="t" style="top:642.42px;font-size:12.5px;line-height:12.5px;color:#f4f4f6;left:1468px;">255</div>
<svg class="a" style="left:1499px;top:640px;" width="10" height="17" viewBox="0 0 10 17"><path d="M1.5 6.5 L5 3 L8.5 6.5Z" fill="#4a4a4e"/><path d="M1.5 10.5 L5 14 L8.5 10.5Z" fill="#a0a0a4"/></svg>
<div class="t" style="top:673.84px;font-size:12px;line-height:12px;color:#a0a0a6;right:562.5px;text-align:right;">HTML:</div>
<div class="a" style="left:1364px;top:670px;width:108px;height:20px;background:#1b1b1d;border:1px solid #0b0b0c;border-radius:3px"></div>
<div class="t" style="top:674.34px;font-size:12px;line-height:12px;color:#f4f4f6;left:1367px;">#ff55ff</div>
<div class="a" style="left:1317px;top:702px;width:95px;height:23px;border:1px solid #45464c;border-radius:12px"></div>
<div class="t" style="top:708.42px;font-size:12.5px;line-height:12.5px;color:#b4b4ba;left:964.5px;width:800px;text-align:center;">Cancel</div>
<div class="a" style="left:1422px;top:702px;width:95px;height:23px;border:1.3px solid #d2473c;border-radius:12px"></div>
<div class="t" style="top:708.42px;font-size:12.5px;line-height:12.5px;color:#f4f4f6;left:1069.5px;width:800px;text-align:center;">OK</div>
<div class="a" style="left:1314px;top:663px;width:213px;height:76px;border:3px solid #b6e11e"></div>
<div class="a" style="left:0px;top:960px;width:1920px;height:1px;background:#0a0a0b;"></div>
<div class="a" style="left:0px;top:961px;width:1920px;height:23px;background:#222226;"></div>
<div class="t" style="top:965.84px;font-size:12px;line-height:12px;color:#a8a8ac;left:1254.5px;">Playback: 24 frames/sec</div>
<div class="t" style="top:965.84px;font-size:12px;line-height:12px;color:#a8a8ac;right:12.5px;text-align:right;">5% -  405 MB</div>
<div class="a" style="left:1px;top:961px;width:1px;height:23px;background:#0a0a0b;"></div>
<div class="a" style="left:0px;top:984px;width:1920px;height:48px;background:#1a1a1d;"></div>
<svg class="a" style="left:44px;top:999px;" width="22" height="20" viewBox="0 0 22 20"><circle cx="11" cy="5.3" r="3.9" fill="#f0f0f2"/><circle cx="6" cy="14.3" r="3.9" fill="#f0f0f2"/><circle cx="16" cy="14.3" r="3.9" fill="#f0f0f2"/><path d="M8.6 7.8 L11 11.3 L13.4 7.8Z M9.4 13 L11 11.3 L8.2 11.2Z M12.6 13 L11 11.3 L13.8 11.2Z" fill="#f0f0f2"/></svg>
<div class="t" style="top:1003.00px;font-size:13px;line-height:13px;color:#ececee;-webkit-text-stroke:0.3px #ececee;letter-spacing:0.45px;left:72.3px;">DaVinci Resolve 20</div>
<div class="a" style="left:901px;top:984px;width:118px;height:48px;background:#000000;"></div>
<div class="a" style="left:901px;top:1030px;width:118px;height:2px;background:#e8483a;"></div>
<div class="t" style="top:1013.00px;font-size:13px;line-height:13px;color:#a0a0a4;left:200px;width:800px;text-align:center;">Media</div>
<div class="t" style="top:1013.00px;font-size:13px;line-height:13px;color:#a0a0a4;left:320px;width:800px;text-align:center;">Cut</div>
<div class="t" style="top:1013.00px;font-size:13px;line-height:13px;color:#a0a0a4;left:440px;width:800px;text-align:center;">Edit</div>
<div class="t" style="top:1013.00px;font-size:13px;line-height:13px;color:#f4f4f6;-webkit-text-stroke:0.3px #f4f4f6;letter-spacing:0.2px;left:559.5px;width:800px;text-align:center;">Fusion</div>
<div class="t" style="top:1013.00px;font-size:13px;line-height:13px;color:#a0a0a4;left:679.5px;width:800px;text-align:center;">Color</div>
<div class="t" style="top:1013.00px;font-size:13px;line-height:13px;color:#a0a0a4;left:800px;width:800px;text-align:center;">Fairlight</div>
<div class="t" style="top:1013.00px;font-size:13px;line-height:13px;color:#a0a0a4;left:919.5px;width:800px;text-align:center;">Deliver</div>
<svg class="a" style="left:591px;top:990px;" width="20" height="19" viewBox="0 0 20 19"><path d="M4 1.5 H16 M3 3.5 H17" stroke="#8e8e92" stroke-width="1"/><rect x="2" y="5.5" width="16" height="12" rx="1.8" fill="none" stroke="#8e8e92" stroke-width="1.4"/><circle cx="5.5" cy="8.5" r="1.1" fill="#8e8e92"/><path d="M4 15 L7.5 11.5 L10.5 14 L13.5 11 L16.5 14" fill="none" stroke="#8e8e92" stroke-width="1.1"/></svg>
<svg class="a" style="left:707px;top:990px;" width="27" height="19" viewBox="0 0 27 19"><path d="M1.5 10.5 H7 M3.5 7.5 H8 M2.5 13.5 H7.5" stroke="#8e8e92" stroke-width="1.4" stroke-linecap="round"/><path d="M10.5 3 H24 Q25.5 3 25 4.8 L23 14.5 Q22.6 16 21 16 H8.5 Z" fill="none" stroke="#8e8e92" stroke-width="1.5" stroke-linejoin="round"/><circle cx="13.5" cy="6.5" r="0.9" fill="#8e8e92"/><circle cx="21" cy="6.5" r="0.9" fill="#8e8e92"/><circle cx="12.5" cy="13" r="0.9" fill="#8e8e92"/><circle cx="20" cy="13" r="0.9" fill="#8e8e92"/><path d="M17.5 0.5 L14 18.5" stroke="#8e8e92" stroke-width="1.1"/></svg>
<svg class="a" style="left:829px;top:990px;" width="24" height="20" viewBox="0 0 24 20"><path d="M12 2 V19" stroke="#8e8e92" stroke-width="1.2"/><circle cx="12" cy="2" r="1.3" fill="#8e8e92"/><rect x="1" y="4" width="8.5" height="3" rx="1.5" fill="#8e8e92"/><rect x="2.5" y="8.5" width="7" height="3" rx="1.5" fill="#8e8e92"/><rect x="1" y="13" width="8.5" height="3" rx="1.5" fill="#8e8e92"/><rect x="14" y="4" width="7" height="3" rx="1.5" fill="#8e8e92"/><rect x="14.5" y="8.5" width="7.5" height="3" rx="1.5" fill="#8e8e92"/><rect x="14" y="13" width="9" height="3" rx="1.5" fill="#8e8e92"/></svg>
<svg class="a" style="left:949px;top:989px;" width="22" height="20" viewBox="0 0 22 20"><path d="M8 16 L18 4" stroke="#d8d8dc" stroke-width="3" stroke-linecap="round"/><path d="M4 6 L5 8 L7 9 L5 10 L4 12 L3 10 L1 9 L3 8Z M11 2 L12 4 L14 5 L12 6 L11 8 L10 6 L8 5 L10 4Z" fill="#e8d040"/><path d="M2 16 Q4 12 7 14" stroke="#4a4a20" stroke-width="3" fill="none"/></svg>
<svg class="a" style="left:1069px;top:990px;" width="22" height="20" viewBox="0 0 22 20"><circle cx="11.0" cy="3.0" r="1.6" fill="#6e6e72"/><circle cx="16.0" cy="5.1" r="1.6" fill="#5a5a5e"/><circle cx="18.0" cy="10.0" r="1.6" fill="#7e7e82"/><circle cx="16.0" cy="14.9" r="1.6" fill="#8e8e92"/><circle cx="11.0" cy="17.0" r="1.6" fill="#9e9ea2"/><circle cx="6.1" cy="15.0" r="1.6" fill="#aeaeb2"/><circle cx="4.0" cy="10.0" r="1.6" fill="#9e9ea2"/><circle cx="6.0" cy="5.1" r="1.6" fill="#8e8e92"/><circle cx="11" cy="10" r="1.6" fill="#a0a0a4"/></svg>
<svg class="a" style="left:1191px;top:990px;" width="18" height="19" viewBox="0 0 18 19"><path d="M6 15 V3 L15 1 V13" fill="none" stroke="#8e8e92" stroke-width="2"/><ellipse cx="4" cy="15" rx="3" ry="2.3" fill="#8e8e92"/><ellipse cx="13" cy="13" rx="3" ry="2.3" fill="#8e8e92"/></svg>
<svg class="a" style="left:1309px;top:989px;" width="22" height="20" viewBox="0 0 22 20"><path d="M7 13 Q9 3 20 1 Q18 12 9 15Z" fill="none" stroke="#8e8e92" stroke-width="1.4"/><circle cx="14" cy="7" r="1.8" fill="none" stroke="#8e8e92"/><path d="M7 13 L3 17 M9 15 L6 19 M5 10 L2 11" stroke="#8e8e92" stroke-width="1.4"/></svg>
<svg class="a" style="left:1828px;top:1000px;" width="16" height="16" viewBox="0 0 16 16"><path d="M8 1 L15 7.5 H13 V14 H9.5 V10 H6.5 V14 H3 V7.5 H1Z" fill="#a8a8ac"/></svg>
<svg class="a" style="left:1877px;top:1000px;" width="17" height="17" viewBox="0 0 17 17"><circle cx="8.5" cy="8.5" r="4.6" fill="none" stroke="#a8a8ac" stroke-width="2.6"/><rect x="7.2" y="0.6" width="2.6" height="3.2" rx="0.5" fill="#a8a8ac" transform="rotate(0 8.5 8.5)"/><rect x="7.2" y="0.6" width="2.6" height="3.2" rx="0.5" fill="#a8a8ac" transform="rotate(45 8.5 8.5)"/><rect x="7.2" y="0.6" width="2.6" height="3.2" rx="0.5" fill="#a8a8ac" transform="rotate(90 8.5 8.5)"/><rect x="7.2" y="0.6" width="2.6" height="3.2" rx="0.5" fill="#a8a8ac" transform="rotate(135 8.5 8.5)"/><rect x="7.2" y="0.6" width="2.6" height="3.2" rx="0.5" fill="#a8a8ac" transform="rotate(180 8.5 8.5)"/><rect x="7.2" y="0.6" width="2.6" height="3.2" rx="0.5" fill="#a8a8ac" transform="rotate(225 8.5 8.5)"/><rect x="7.2" y="0.6" width="2.6" height="3.2" rx="0.5" fill="#a8a8ac" transform="rotate(270 8.5 8.5)"/><rect x="7.2" y="0.6" width="2.6" height="3.2" rx="0.5" fill="#a8a8ac" transform="rotate(315 8.5 8.5)"/></svg>
<div class="a" style="left:0px;top:1032px;width:1920px;height:48px;background:#dcdcdc;"></div>
<svg class="a" style="left:21px;top:1045px;" width="23" height="23" viewBox="0 0 23 23"><rect x="0" y="0" width="10.8" height="10.8" rx="1" fill="#3aa8f0"/><rect x="12.2" y="0" width="10.8" height="10.8" rx="1" fill="#2f9be8"/><rect x="0" y="12.2" width="10.8" height="10.8" rx="1" fill="#2a8ee0"/><rect x="12.2" y="12.2" width="10.8" height="10.8" rx="1" fill="#1f80d8"/></svg>
<svg class="a" style="left:64px;top:1044px;" width="25" height="25" viewBox="0 0 25 25"><circle cx="10.5" cy="10.5" r="8" fill="none" stroke="#1a73c8" stroke-width="2.6"/><path d="M16.5 16.5 L23 23" stroke="#1a60b0" stroke-width="3" stroke-linecap="round"/></svg>
<svg class="a" style="left:108px;top:1044px;" width="25" height="25" viewBox="0 0 25 25"><rect x="8" y="1" width="16" height="16" fill="#f0f0f0" stroke="#c0c0c0"/><rect x="1" y="8" width="16" height="16" fill="#1f1f1f"/><rect x="8" y="8" width="9" height="9" fill="#b8b8b8"/></svg>
<svg class="a" style="left:153px;top:1044px;" width="25" height="25" viewBox="0 0 25 25"><path d="M3 20 Q0 12 7 5 L11 3 Q7 12 12 20Z" fill="#3a8ef0"/><path d="M22 5 Q25 13 18 20 L14 22 Q18 13 13 5Z" fill="#e84ab0"/><path d="M7 5 Q12 0 17 3 L12 8Z" fill="#f0a030"/><path d="M18 20 Q13 25 8 22 L12 17Z" fill="#8a5af0"/></svg>
<svg class="a" style="left:196px;top:1043px;" width="26" height="26" viewBox="0 0 26 26"><path d="M1 4 H10 L12 6 H25 V23 H1Z" fill="#e8b420"/><rect x="1" y="9" width="24" height="14" fill="#f8cc40"/><rect x="8" y="15" width="11" height="5" fill="#1a78d0"/></svg>
<svg class="a" style="left:240px;top:1043px;" width="25" height="26" viewBox="0 0 25 26"><path d="M8 6 V3 a4.5 4.5 0 0 1 9 0 V6" fill="none" stroke="#1a78d0" stroke-width="2"/><rect x="1" y="6" width="23" height="19" rx="2" fill="#1a5fa8"/><rect x="8" y="10" width="4" height="4" fill="#f25022"/><rect x="13" y="10" width="4" height="4" fill="#7fba00"/><rect x="8" y="15" width="4" height="4" fill="#00a4ef"/><rect x="13" y="15" width="4" height="4" fill="#ffb900"/></svg>
<svg class="a" style="left:285px;top:1044px;" width="25" height="25" viewBox="0 0 25 25"><path d="M12 1 L17 6 L12 11 L7 6Z" fill="#f06a6a"/><path d="M6 7 L11 12 L6 17 L1 12Z" fill="#7ab0f0"/><path d="M18 7 L23 12 L18 17 L13 12Z" fill="#8ad070"/><path d="M12 13 L17 18 L12 23 L7 18Z" fill="#f0d070"/></svg>
<svg class="a" style="left:328px;top:1043px;" width="26" height="26" viewBox="0 0 26 26"><circle cx="13" cy="13" r="12" fill="#db4437"/><path d="M13 13 L2.6 7 A12 12 0 0 0 9 24.3Z" fill="#0f9d58"/><path d="M13 13 L9 24.3 A12 12 0 0 0 25 13Z" fill="#f4c20d"/><path d="M13 13 L25 13 A12 12 0 0 0 13 1 A12 12 0 0 0 2.6 7 Z" fill="#db4437"/><circle cx="13" cy="13" r="5.5" fill="#fff"/><circle cx="13" cy="13" r="4.3" fill="#4285f4"/></svg>
<svg class="a" style="left:372px;top:1043px;" width="26" height="26" viewBox="0 0 26 26"><circle cx="13" cy="13" r="12" fill="#1a8ad8"/><path d="M4 17 Q6 5 15 5 Q24 6 24 13 H10 Q11 20 20 20 Q14 26 8 22Z" fill="#4ad080"/><path d="M10 13 H24 Q23 8 17 8 Q11 8 10 13Z" fill="#1a8ad8"/></svg>
<svg class="a" style="left:416px;top:1043px;" width="26" height="26" viewBox="0 0 26 26"><path d="M18 1 L25 4.5 V21.5 L18 25 L7 14.5 L3 17.5 L1 16 V10 L3 8.5 L7 11.5Z" fill="#23a0ea"/><path d="M18 7.5 L11 13 L18 18.5Z" fill="#dadada"/><path d="M18 1 L25 4.5 V21.5 L18 25Z" fill="#0a6cc0"/></svg>
<div class="a" style="left:454px;top:1037px;width:38px;height:38px;border-radius:4px;background:#eeeeee;border:1px solid #d8d8d8"></div>
<svg class="a" style="left:462px;top:1044px;" width="21" height="21" viewBox="0 0 21 21"><rect x="0.5" y="0.5" width="20" height="20" rx="4" fill="#1f2a3c"/><circle cx="10.5" cy="6.5" r="3" fill="#38c8f0"/><circle cx="7" cy="12.5" r="3" fill="#e6e21c"/><circle cx="14" cy="12.5" r="3" fill="#f04a3c"/></svg>
<div class="a" style="left:464px;top:1071px;width:18px;height:3px;background:#1a6fc8;"></div>
<svg class="a" style="left:507px;top:1043px;" width="20" height="26" viewBox="0 0 20 26"><rect x="1" y="3" width="18" height="22" fill="#40a8e8"/><path d="M4 8 H16 M4 12 H16 M4 16 H16 M4 20 H16" stroke="#1a5a90" stroke-width="1.5"/><path d="M3 1 V4 M6 1 V4 M9 1 V4 M12 1 V4 M15 1 V4" stroke="#2a6aa0"/><rect x="1" y="23" width="18" height="2" fill="#c8643a"/></svg>
<svg class="a" style="left:548px;top:1043px;" width="26" height="26" viewBox="0 0 26 26"><path d="M1 6 L24 2 V23 H1Z" fill="#1a7ad8"/><path d="M1 6 L24 2 V5 L1 9Z" fill="#4aa8f0"/><path d="M10 11 L18 15.5 L10 20Z" fill="#fff"/></svg>
<svg class="a" style="left:593px;top:1043px;" width="25" height="26" viewBox="0 0 25 26"><path d="M2 2 H12 V12 H2Z" fill="none" stroke="#d83020" stroke-width="2.5" stroke-dasharray="2.5 1.5"/><path d="M8 8 L20 22 M20 8 L8 22" stroke="#2a7ad0" stroke-width="2"/><circle cx="8" cy="22" r="2.5" fill="none" stroke="#2a7ad0" stroke-width="1.5"/><circle cx="22" cy="12" r="2.5" fill="none" stroke="#2a7ad0" stroke-width="1.5"/></svg>
<svg class="a" style="left:637px;top:1043px;" width="25" height="26" viewBox="0 0 25 26"><path d="M12 2 Q24 2 24 12 Q24 17 19 16 Q15 15 16 19 Q17 24 11 24 Q1 23 1 13 Q1 2 12 2Z" fill="#50b8f0"/><circle cx="7" cy="9" r="2" fill="#f04040"/><circle cx="12" cy="6" r="2" fill="#f0c030"/><circle cx="6" cy="15" r="2" fill="#40c040"/><path d="M22 4 L15 20" stroke="#a06a30" stroke-width="3"/></svg>
<div class="a" style="left:205.5px;top:1072px;width:6px;height:3px;border-radius:2px;background:#7a7a7a"></div>
<div class="a" style="left:293.5px;top:1072px;width:6px;height:3px;border-radius:2px;background:#7a7a7a"></div>
<div class="a" style="left:337.5px;top:1072px;width:6px;height:3px;border-radius:2px;background:#7a7a7a"></div>
<div class="a" style="left:381.5px;top:1072px;width:6px;height:3px;border-radius:2px;background:#7a7a7a"></div>
<div class="a" style="left:425.5px;top:1072px;width:6px;height:3px;border-radius:2px;background:#7a7a7a"></div>
<div class="a" style="left:513.5px;top:1072px;width:6px;height:3px;border-radius:2px;background:#7a7a7a"></div>
<div class="a" style="left:557.5px;top:1072px;width:6px;height:3px;border-radius:2px;background:#7a7a7a"></div>
<div class="a" style="left:601.5px;top:1072px;width:6px;height:3px;border-radius:2px;background:#7a7a7a"></div>
<div class="a" style="left:645.5px;top:1072px;width:6px;height:3px;border-radius:2px;background:#7a7a7a"></div>
<svg class="a" style="left:1575px;top:1050px;" width="14" height="10" viewBox="0 0 14 10"><path d="M1.5 8 L7 2.5 L12.5 8" fill="none" stroke="#222" stroke-width="1.3"/></svg>
<svg class="a" style="left:1604px;top:1046px;" width="22" height="20" viewBox="0 0 22 20"><path d="M3 9 A7 7 0 0 1 16 5 M17 11 A7 7 0 0 1 4 15" fill="none" stroke="#222" stroke-width="1.3"/><path d="M16 1.5 V5.5 H12" fill="none" stroke="#222" stroke-width="1.3"/><circle cx="14.5" cy="14.5" r="4" fill="#f0a020"/></svg>
<svg class="a" style="left:1638px;top:1047px;" width="16" height="16" viewBox="0 0 16 16"><path d="M1 4.5 H15 M1 11.5 H15" stroke="#222" stroke-width="1.6"/><rect x="9" y="2" width="2.5" height="5" fill="#222"/><rect x="4.5" y="9" width="2.5" height="5" fill="#222"/></svg>
<svg class="a" style="left:1669px;top:1044px;" width="18" height="20" viewBox="0 0 18 20"><path d="M1.5 18 V7 L6 11 L10.5 7 V18 M14.5 8 V18" fill="none" stroke="#111" stroke-width="2.2"/><circle cx="14.5" cy="3.5" r="3" fill="#e83a30"/></svg>
<svg class="a" style="left:1703px;top:1045px;" width="14" height="20" viewBox="0 0 14 20"><rect x="4" y="1" width="6" height="11" rx="3" fill="none" stroke="#2a62c0" stroke-width="1.5"/><path d="M1.5 8 Q1.5 15 7 15 Q12.5 15 12.5 8 M7 15 V19" fill="none" stroke="#2a62c0" stroke-width="1.5"/></svg>
<svg class="a" style="left:1733px;top:1048px;" width="18" height="14" viewBox="0 0 18 14"><path d="M1 5 Q9 -2 17 5 M3.5 7.5 Q9 2.5 14.5 7.5 M6 10 Q9 7.5 12 10" fill="none" stroke="#222" stroke-width="1.4"/><circle cx="9" cy="12.2" r="1.3" fill="#222"/></svg>
<svg class="a" style="left:1757px;top:1047px;" width="18" height="16" viewBox="0 0 18 16"><path d="M1.5 5 H4.5 L9 1.5 V14.5 L4.5 11 H1.5Z" fill="none" stroke="#222" stroke-width="1.2"/><path d="M11 5.5 Q12.5 8 11 10.5 M13.5 3.5 Q16 8 13.5 12.5" fill="none" stroke="#222" stroke-width="1.2"/></svg>
<svg class="a" style="left:1781px;top:1047px;" width="18" height="16" viewBox="0 0 18 16"><rect x="1.5" y="4.5" width="14" height="9" rx="1.5" fill="none" stroke="#222" stroke-width="1.3"/><rect x="3" y="6" width="11" height="6" fill="#222"/><rect x="15.5" y="7" width="2" height="4" fill="#222"/><path d="M5 1 L3 5 L6 5 L4 9" stroke="#222" stroke-width="1.1" fill="none"/></svg>
<div class="t" style="top:1042.34px;font-size:12px;line-height:12px;color:#1a1a1a;right:43.40000000000009px;text-align:right;">07.54</div>
<div class="t" style="top:1058.34px;font-size:12px;line-height:12px;color:#1a1a1a;right:43.40000000000009px;text-align:right;">17/09/2025</div>
<svg class="a" style="left:1884px;top:1046px;" width="17" height="19" viewBox="0 0 17 19"><path d="M3 13 V8 a5.5 5.5 0 0 1 11 0 V13 L15.5 15 H1.5Z" fill="#222"/><path d="M6.5 16 a2 2 0 0 0 4 0" fill="#222"/><text x="9" y="11.5" font-size="6" font-weight="700" fill="#dadada" text-anchor="middle" font-family="Liberation Sans">Z</text><text x="14.5" y="5" font-size="5" font-weight="700" fill="#222" font-family="Liberation Sans">z</text></svg></body></html>
